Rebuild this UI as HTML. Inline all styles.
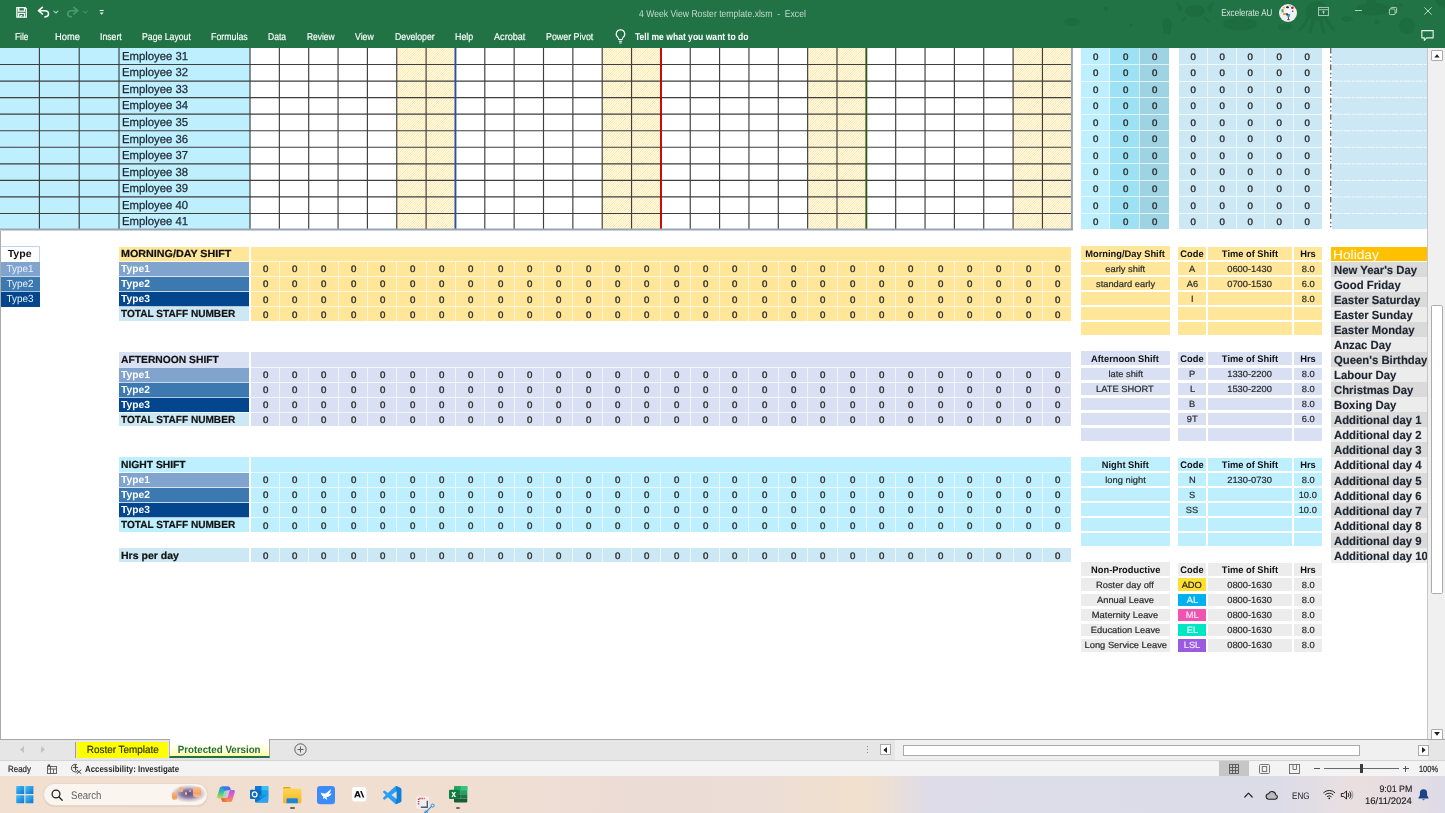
<!DOCTYPE html>
<html><head><meta charset="utf-8"><title>4 Week View Roster template.xlsm - Excel</title>
<style>
html,body{margin:0;padding:0;}
body{width:1445px;height:813px;overflow:hidden;position:relative;background:#fff;font-family:"Liberation Sans",sans-serif;}
#root{position:absolute;left:0;top:0;width:1445px;height:813px;overflow:hidden;background:transparent;will-change:transform;}
#root div{position:absolute;box-sizing:border-box;}
#root svg{position:absolute;overflow:visible;}
.t{white-space:nowrap;overflow:visible;}
.t span{display:inline-block;}
#root .zr{display:flex;}
.zr b{flex:1 1 0;text-align:center;font-weight:400;display:block;transform:matrix(1.02,.0005,0,1,0,0);-webkit-text-stroke:.4px currentColor;}
.rt{top:28px;height:17px;line-height:17px;font-size:10px;color:#fff;-webkit-text-stroke:.15px #fff;}
.rt span{transform-origin:0 50%;}
</style></head><body><div id="root">
<div style="left:0px;top:48px;width:250px;height:182.05px;background:#bdefff;"></div>
<svg style="left:0;top:48px" width="1074" height="183.05" viewBox="0 0 1074 183.05"><defs><pattern id="hz" patternUnits="userSpaceOnUse" width="12" height="12"><rect width="12" height="12" fill="#fffef7"/><path d="M0.5 -.5L-.5 0.5M2.9 -.5L-.5 2.9M5.3 -.5L-.5 5.3M7.7 -.5L-.5 7.7M10.1 -.5L-.5 10.1M12.5 -.5L-.5 12.5M14.9 -.5L-.5 14.9M17.3 -.5L-.5 17.3M19.7 -.5L-.5 19.7M22.1 -.5L-.5 22.1M24.5 -.5L-.5 24.5" stroke="#ffd668" stroke-width=".7"/></pattern></defs><rect x="396.75" y="0" width="58.7" height="182.05" fill="url(#hz)"/><rect x="602.2" y="0" width="58.7" height="182.05" fill="url(#hz)"/><rect x="807.65" y="0" width="58.7" height="182.05" fill="url(#hz)"/><rect x="1013.1" y="0" width="58.7" height="182.05" fill="url(#hz)"/><path d="M0 16.55H1072M0 33.1H1072M0 49.65H1072M0 66.2H1072M0 82.75H1072M0 99.3H1072M0 115.85H1072M0 132.4H1072M0 148.95H1072M0 165.5H1072M39.4 0V182.05M79.2 0V182.05M119 0V182.05M250 0V182.05M279.35 0V182.05M308.7 0V182.05M338.05 0V182.05M367.4 0V182.05M396.75 0V182.05M426.1 0V182.05M484.8 0V182.05M514.15 0V182.05M543.5 0V182.05M572.85 0V182.05M602.2 0V182.05M631.55 0V182.05M690.25 0V182.05M719.6 0V182.05M748.95 0V182.05M778.3 0V182.05M807.65 0V182.05M837 0V182.05M895.7 0V182.05M925.05 0V182.05M954.4 0V182.05M983.75 0V182.05M1013.1 0V182.05M1042.45 0V182.05" stroke="#3e3e3e" stroke-width="1.15" fill="none"/><path d="M455.45 0V182.05" stroke="#2a51a0" stroke-width="1.9"/><path d="M661 0V182.05" stroke="#c40000" stroke-width="1.9"/><path d="M866.35 0V182.05" stroke="#2f5a1c" stroke-width="1.9"/><path d="M1071.9 0V182.05M0 181.45H1073" stroke="#9aa4b2" stroke-width="2"/></svg>
<div class="t" style="left:119px;top:47.75px;width:131px;height:16.55px;line-height:16.55px;font-size:11.6px;color:#1c2730;padding-left:2.9px;-webkit-text-stroke:.25px #1c2730;"><span style="transform:matrix(0.977,.0005,0,1,0,0);transform-origin:0 50%">Employee 31</span></div>
<div class="t" style="left:119px;top:64.3px;width:131px;height:16.55px;line-height:16.55px;font-size:11.6px;color:#1c2730;padding-left:2.9px;-webkit-text-stroke:.25px #1c2730;"><span style="transform:matrix(0.977,.0005,0,1,0,0);transform-origin:0 50%">Employee 32</span></div>
<div class="t" style="left:119px;top:80.85px;width:131px;height:16.55px;line-height:16.55px;font-size:11.6px;color:#1c2730;padding-left:2.9px;-webkit-text-stroke:.25px #1c2730;"><span style="transform:matrix(0.977,.0005,0,1,0,0);transform-origin:0 50%">Employee 33</span></div>
<div class="t" style="left:119px;top:97.4px;width:131px;height:16.55px;line-height:16.55px;font-size:11.6px;color:#1c2730;padding-left:2.9px;-webkit-text-stroke:.25px #1c2730;"><span style="transform:matrix(0.977,.0005,0,1,0,0);transform-origin:0 50%">Employee 34</span></div>
<div class="t" style="left:119px;top:113.95px;width:131px;height:16.55px;line-height:16.55px;font-size:11.6px;color:#1c2730;padding-left:2.9px;-webkit-text-stroke:.25px #1c2730;"><span style="transform:matrix(0.977,.0005,0,1,0,0);transform-origin:0 50%">Employee 35</span></div>
<div class="t" style="left:119px;top:130.5px;width:131px;height:16.55px;line-height:16.55px;font-size:11.6px;color:#1c2730;padding-left:2.9px;-webkit-text-stroke:.25px #1c2730;"><span style="transform:matrix(0.977,.0005,0,1,0,0);transform-origin:0 50%">Employee 36</span></div>
<div class="t" style="left:119px;top:147.05px;width:131px;height:16.55px;line-height:16.55px;font-size:11.6px;color:#1c2730;padding-left:2.9px;-webkit-text-stroke:.25px #1c2730;"><span style="transform:matrix(0.977,.0005,0,1,0,0);transform-origin:0 50%">Employee 37</span></div>
<div class="t" style="left:119px;top:163.6px;width:131px;height:16.55px;line-height:16.55px;font-size:11.6px;color:#1c2730;padding-left:2.9px;-webkit-text-stroke:.25px #1c2730;"><span style="transform:matrix(0.977,.0005,0,1,0,0);transform-origin:0 50%">Employee 38</span></div>
<div class="t" style="left:119px;top:180.15px;width:131px;height:16.55px;line-height:16.55px;font-size:11.6px;color:#1c2730;padding-left:2.9px;-webkit-text-stroke:.25px #1c2730;"><span style="transform:matrix(0.977,.0005,0,1,0,0);transform-origin:0 50%">Employee 39</span></div>
<div class="t" style="left:119px;top:196.7px;width:131px;height:16.55px;line-height:16.55px;font-size:11.6px;color:#1c2730;padding-left:2.9px;-webkit-text-stroke:.25px #1c2730;"><span style="transform:matrix(0.977,.0005,0,1,0,0);transform-origin:0 50%">Employee 40</span></div>
<div class="t" style="left:119px;top:213.25px;width:131px;height:16.55px;line-height:16.55px;font-size:11.6px;color:#1c2730;padding-left:2.9px;-webkit-text-stroke:.25px #1c2730;"><span style="transform:matrix(0.977,.0005,0,1,0,0);transform-origin:0 50%">Employee 41</span></div>
<div style="left:1081.3px;top:48px;width:28.5px;height:181.25px;background:#bdefff;"></div>
<div style="left:1109.8px;top:48px;width:29.6px;height:181.25px;background:#9de1f5;"></div>
<div style="left:1139.4px;top:48px;width:29.8px;height:181.25px;background:#9dd3e3;"></div>
<div style="left:1179.1px;top:48px;width:142.5px;height:181.25px;background:#cce8f4;"></div>
<div style="left:1331.6px;top:48px;width:96.4px;height:181.25px;background:#cce8f4;"></div>
<div style="left:1081.3px;top:64.05px;width:87.9px;height:1px;background:rgba(255,255,255,.7);"></div>
<div style="left:1179.1px;top:64.05px;width:142.5px;height:1px;background:rgba(255,255,255,.75);"></div>
<div style="left:1081.3px;top:80.6px;width:87.9px;height:1px;background:rgba(255,255,255,.7);"></div>
<div style="left:1179.1px;top:80.6px;width:142.5px;height:1px;background:rgba(255,255,255,.75);"></div>
<div style="left:1081.3px;top:97.15px;width:87.9px;height:1px;background:rgba(255,255,255,.7);"></div>
<div style="left:1179.1px;top:97.15px;width:142.5px;height:1px;background:rgba(255,255,255,.75);"></div>
<div style="left:1081.3px;top:113.7px;width:87.9px;height:1px;background:rgba(255,255,255,.7);"></div>
<div style="left:1179.1px;top:113.7px;width:142.5px;height:1px;background:rgba(255,255,255,.75);"></div>
<div style="left:1081.3px;top:130.25px;width:87.9px;height:1px;background:rgba(255,255,255,.7);"></div>
<div style="left:1179.1px;top:130.25px;width:142.5px;height:1px;background:rgba(255,255,255,.75);"></div>
<div style="left:1081.3px;top:146.8px;width:87.9px;height:1px;background:rgba(255,255,255,.7);"></div>
<div style="left:1179.1px;top:146.8px;width:142.5px;height:1px;background:rgba(255,255,255,.75);"></div>
<div style="left:1081.3px;top:163.35px;width:87.9px;height:1px;background:rgba(255,255,255,.7);"></div>
<div style="left:1179.1px;top:163.35px;width:142.5px;height:1px;background:rgba(255,255,255,.75);"></div>
<div style="left:1081.3px;top:179.9px;width:87.9px;height:1px;background:rgba(255,255,255,.7);"></div>
<div style="left:1179.1px;top:179.9px;width:142.5px;height:1px;background:rgba(255,255,255,.75);"></div>
<div style="left:1081.3px;top:196.45px;width:87.9px;height:1px;background:rgba(255,255,255,.7);"></div>
<div style="left:1179.1px;top:196.45px;width:142.5px;height:1px;background:rgba(255,255,255,.75);"></div>
<div style="left:1081.3px;top:213px;width:87.9px;height:1px;background:rgba(255,255,255,.7);"></div>
<div style="left:1179.1px;top:213px;width:142.5px;height:1px;background:rgba(255,255,255,.75);"></div>
<div style="left:1207.1px;top:48px;width:1px;height:181.25px;background:rgba(255,255,255,.6);"></div>
<div style="left:1235.6px;top:48px;width:1px;height:181.25px;background:rgba(255,255,255,.6);"></div>
<div style="left:1264.4px;top:48px;width:1px;height:181.25px;background:rgba(255,255,255,.6);"></div>
<div style="left:1292.9px;top:48px;width:1px;height:181.25px;background:rgba(255,255,255,.6);"></div>
<div style="left:1109.2px;top:48px;width:1px;height:181.25px;background:rgba(255,255,255,.6);"></div>
<div style="left:1139px;top:48px;width:1px;height:181.25px;background:rgba(255,255,255,.6);"></div>
<svg style="left:1329px;top:48px" width="100" height="181.25" viewBox="0 0 100 181.25"><path d="M2.5 16.55H99M2.5 33.1H99M2.5 49.65H99M2.5 66.2H99M2.5 82.75H99M2.5 99.3H99M2.5 115.85H99M2.5 132.4H99M2.5 148.95H99M2.5 165.5H99" stroke="#fff" stroke-width=".8" stroke-dasharray="7.6 .9 2.6 .9" opacity=".92" fill="none"/><path d="M1.8 0V181.25" stroke="#3c3c3c" stroke-width="1.1" stroke-dasharray="5.6 2.6 1.7 2.6 1.3 2.75" fill="none"/></svg>
<div class="zr" style="left:1081.3px;top:48.6px;width:87.9px;height:16.55px;line-height:16.55px;font-size:9.5px;color:#2a2a2a"><b>0</b><b>0</b><b>0</b></div>
<div class="zr" style="left:1179.1px;top:48.6px;width:142.5px;height:16.55px;line-height:16.55px;font-size:9.5px;color:#2a2a2a"><b>0</b><b>0</b><b>0</b><b>0</b><b>0</b></div>
<div class="zr" style="left:1081.3px;top:65.15px;width:87.9px;height:16.55px;line-height:16.55px;font-size:9.5px;color:#2a2a2a"><b>0</b><b>0</b><b>0</b></div>
<div class="zr" style="left:1179.1px;top:65.15px;width:142.5px;height:16.55px;line-height:16.55px;font-size:9.5px;color:#2a2a2a"><b>0</b><b>0</b><b>0</b><b>0</b><b>0</b></div>
<div class="zr" style="left:1081.3px;top:81.7px;width:87.9px;height:16.55px;line-height:16.55px;font-size:9.5px;color:#2a2a2a"><b>0</b><b>0</b><b>0</b></div>
<div class="zr" style="left:1179.1px;top:81.7px;width:142.5px;height:16.55px;line-height:16.55px;font-size:9.5px;color:#2a2a2a"><b>0</b><b>0</b><b>0</b><b>0</b><b>0</b></div>
<div class="zr" style="left:1081.3px;top:98.25px;width:87.9px;height:16.55px;line-height:16.55px;font-size:9.5px;color:#2a2a2a"><b>0</b><b>0</b><b>0</b></div>
<div class="zr" style="left:1179.1px;top:98.25px;width:142.5px;height:16.55px;line-height:16.55px;font-size:9.5px;color:#2a2a2a"><b>0</b><b>0</b><b>0</b><b>0</b><b>0</b></div>
<div class="zr" style="left:1081.3px;top:114.8px;width:87.9px;height:16.55px;line-height:16.55px;font-size:9.5px;color:#2a2a2a"><b>0</b><b>0</b><b>0</b></div>
<div class="zr" style="left:1179.1px;top:114.8px;width:142.5px;height:16.55px;line-height:16.55px;font-size:9.5px;color:#2a2a2a"><b>0</b><b>0</b><b>0</b><b>0</b><b>0</b></div>
<div class="zr" style="left:1081.3px;top:131.35px;width:87.9px;height:16.55px;line-height:16.55px;font-size:9.5px;color:#2a2a2a"><b>0</b><b>0</b><b>0</b></div>
<div class="zr" style="left:1179.1px;top:131.35px;width:142.5px;height:16.55px;line-height:16.55px;font-size:9.5px;color:#2a2a2a"><b>0</b><b>0</b><b>0</b><b>0</b><b>0</b></div>
<div class="zr" style="left:1081.3px;top:147.9px;width:87.9px;height:16.55px;line-height:16.55px;font-size:9.5px;color:#2a2a2a"><b>0</b><b>0</b><b>0</b></div>
<div class="zr" style="left:1179.1px;top:147.9px;width:142.5px;height:16.55px;line-height:16.55px;font-size:9.5px;color:#2a2a2a"><b>0</b><b>0</b><b>0</b><b>0</b><b>0</b></div>
<div class="zr" style="left:1081.3px;top:164.45px;width:87.9px;height:16.55px;line-height:16.55px;font-size:9.5px;color:#2a2a2a"><b>0</b><b>0</b><b>0</b></div>
<div class="zr" style="left:1179.1px;top:164.45px;width:142.5px;height:16.55px;line-height:16.55px;font-size:9.5px;color:#2a2a2a"><b>0</b><b>0</b><b>0</b><b>0</b><b>0</b></div>
<div class="zr" style="left:1081.3px;top:181px;width:87.9px;height:16.55px;line-height:16.55px;font-size:9.5px;color:#2a2a2a"><b>0</b><b>0</b><b>0</b></div>
<div class="zr" style="left:1179.1px;top:181px;width:142.5px;height:16.55px;line-height:16.55px;font-size:9.5px;color:#2a2a2a"><b>0</b><b>0</b><b>0</b><b>0</b><b>0</b></div>
<div class="zr" style="left:1081.3px;top:197.55px;width:87.9px;height:16.55px;line-height:16.55px;font-size:9.5px;color:#2a2a2a"><b>0</b><b>0</b><b>0</b></div>
<div class="zr" style="left:1179.1px;top:197.55px;width:142.5px;height:16.55px;line-height:16.55px;font-size:9.5px;color:#2a2a2a"><b>0</b><b>0</b><b>0</b><b>0</b><b>0</b></div>
<div class="zr" style="left:1081.3px;top:214.1px;width:87.9px;height:16.55px;line-height:16.55px;font-size:9.5px;color:#2a2a2a"><b>0</b><b>0</b><b>0</b></div>
<div class="zr" style="left:1179.1px;top:214.1px;width:142.5px;height:16.55px;line-height:16.55px;font-size:9.5px;color:#2a2a2a"><b>0</b><b>0</b><b>0</b><b>0</b><b>0</b></div>
<div style="left:0px;top:245.8px;width:39.8px;height:60.98px;background:#fff;border:1px solid #b9d6f2;"></div>
<div class="t" style="left:0px;top:246.1px;width:39.6px;height:15.07px;line-height:15.07px;text-align:center;font-size:10.3px;font-weight:700;color:#111;"><span style="transform:matrix(1.03,.0005,0,1,0,0);transform-origin:50% 50%">Type</span></div>
<div style="left:0.5px;top:261.57px;width:39px;height:15.07px;background:#80a4ce;"></div>
<div class="t" style="left:0px;top:260.97px;width:39.6px;height:15.07px;line-height:15.07px;text-align:center;font-size:10.3px;color:#e9f0f9;"><span style="transform:matrix(0.966,.0005,0,1,0,0);transform-origin:50% 50%">Type1</span></div>
<div style="left:0.5px;top:276.64px;width:39px;height:15.07px;background:#3c79b1;"></div>
<div class="t" style="left:0px;top:276.04px;width:39.6px;height:15.07px;line-height:15.07px;text-align:center;font-size:10.3px;color:#e9f0f9;"><span style="transform:matrix(0.966,.0005,0,1,0,0);transform-origin:50% 50%">Type2</span></div>
<div style="left:0.5px;top:291.71px;width:39px;height:15.07px;background:#03468d;"></div>
<div class="t" style="left:0px;top:291.11px;width:39.6px;height:15.07px;line-height:15.07px;text-align:center;font-size:10.3px;color:#e9f0f9;"><span style="transform:matrix(0.966,.0005,0,1,0,0);transform-origin:50% 50%">Type3</span></div>
<div style="left:0.5px;top:276.14px;width:39px;height:1px;background:rgba(255,255,255,.55);"></div>
<div style="left:0.5px;top:291.21px;width:39px;height:1px;background:rgba(255,255,255,.55);"></div>
<div style="left:119.2px;top:246.5px;width:130.3px;height:15.07px;background:#ffe699;"></div>
<div style="left:250.6px;top:246.5px;width:820.8px;height:74.45px;background:#ffe699;"></div>
<div class="t" style="left:119.2px;top:246.1px;width:130.3px;height:15.07px;line-height:15.07px;font-size:10.3px;font-weight:700;color:#111;padding-left:1.6px;-webkit-text-stroke:.2px #111;"><span style="transform:matrix(1.043,.0005,0,1,0,0);transform-origin:0 50%">MORNING/DAY SHIFT</span></div>
<div style="left:119.2px;top:261.57px;width:130.3px;height:15.07px;background:#80a4ce;"></div>
<div class="t" style="left:119.2px;top:261.17px;width:130.3px;height:15.07px;line-height:15.07px;font-size:10.3px;font-weight:700;color:#fff;padding-left:1.6px;"><span style="transform:matrix(0.996,.0005,0,1,0,0);transform-origin:0 50%">Type1</span></div>
<div style="left:119.2px;top:276.64px;width:130.3px;height:15.07px;background:#3c79b1;"></div>
<div class="t" style="left:119.2px;top:276.24px;width:130.3px;height:15.07px;line-height:15.07px;font-size:10.3px;font-weight:700;color:#fff;padding-left:1.6px;"><span style="transform:matrix(0.996,.0005,0,1,0,0);transform-origin:0 50%">Type2</span></div>
<div style="left:119.2px;top:291.71px;width:130.3px;height:15.07px;background:#03468d;"></div>
<div class="t" style="left:119.2px;top:291.31px;width:130.3px;height:15.07px;line-height:15.07px;font-size:10.3px;font-weight:700;color:#fff;padding-left:1.6px;"><span style="transform:matrix(0.996,.0005,0,1,0,0);transform-origin:0 50%">Type3</span></div>
<div style="left:119.2px;top:306.78px;width:130.3px;height:14.17px;background:#cce8f4;"></div>
<div class="t" style="left:119.2px;top:306.38px;width:130.3px;height:15.07px;line-height:15.07px;font-size:10.3px;font-weight:700;color:#111;padding-left:1.6px;-webkit-text-stroke:.2px #111;"><span style="transform:matrix(0.98,.0005,0,1,0,0);transform-origin:0 50%">TOTAL STAFF NUMBER</span></div>
<div style="left:119.2px;top:261.07px;width:952.2px;height:1px;background:rgba(255,255,255,.7);"></div>
<div style="left:119.2px;top:276.14px;width:952.2px;height:1px;background:rgba(255,255,255,.7);"></div>
<div style="left:119.2px;top:291.21px;width:952.2px;height:1px;background:rgba(255,255,255,.7);"></div>
<div style="left:119.2px;top:306.28px;width:952.2px;height:1px;background:rgba(255,255,255,.7);"></div>
<div style="left:278.85px;top:261.57px;width:1px;height:59.38px;background:rgba(255,255,255,.65);"></div>
<div style="left:308.2px;top:261.57px;width:1px;height:59.38px;background:rgba(255,255,255,.65);"></div>
<div style="left:337.55px;top:261.57px;width:1px;height:59.38px;background:rgba(255,255,255,.65);"></div>
<div style="left:366.9px;top:261.57px;width:1px;height:59.38px;background:rgba(255,255,255,.65);"></div>
<div style="left:396.25px;top:261.57px;width:1px;height:59.38px;background:rgba(255,255,255,.65);"></div>
<div style="left:425.6px;top:261.57px;width:1px;height:59.38px;background:rgba(255,255,255,.65);"></div>
<div style="left:454.95px;top:261.57px;width:1px;height:59.38px;background:rgba(255,255,255,.65);"></div>
<div style="left:484.3px;top:261.57px;width:1px;height:59.38px;background:rgba(255,255,255,.65);"></div>
<div style="left:513.65px;top:261.57px;width:1px;height:59.38px;background:rgba(255,255,255,.65);"></div>
<div style="left:543px;top:261.57px;width:1px;height:59.38px;background:rgba(255,255,255,.65);"></div>
<div style="left:572.35px;top:261.57px;width:1px;height:59.38px;background:rgba(255,255,255,.65);"></div>
<div style="left:601.7px;top:261.57px;width:1px;height:59.38px;background:rgba(255,255,255,.65);"></div>
<div style="left:631.05px;top:261.57px;width:1px;height:59.38px;background:rgba(255,255,255,.65);"></div>
<div style="left:660.4px;top:261.57px;width:1px;height:59.38px;background:rgba(255,255,255,.65);"></div>
<div style="left:689.75px;top:261.57px;width:1px;height:59.38px;background:rgba(255,255,255,.65);"></div>
<div style="left:719.1px;top:261.57px;width:1px;height:59.38px;background:rgba(255,255,255,.65);"></div>
<div style="left:748.45px;top:261.57px;width:1px;height:59.38px;background:rgba(255,255,255,.65);"></div>
<div style="left:777.8px;top:261.57px;width:1px;height:59.38px;background:rgba(255,255,255,.65);"></div>
<div style="left:807.15px;top:261.57px;width:1px;height:59.38px;background:rgba(255,255,255,.65);"></div>
<div style="left:836.5px;top:261.57px;width:1px;height:59.38px;background:rgba(255,255,255,.65);"></div>
<div style="left:865.85px;top:261.57px;width:1px;height:59.38px;background:rgba(255,255,255,.65);"></div>
<div style="left:895.2px;top:261.57px;width:1px;height:59.38px;background:rgba(255,255,255,.65);"></div>
<div style="left:924.55px;top:261.57px;width:1px;height:59.38px;background:rgba(255,255,255,.65);"></div>
<div style="left:953.9px;top:261.57px;width:1px;height:59.38px;background:rgba(255,255,255,.65);"></div>
<div style="left:983.25px;top:261.57px;width:1px;height:59.38px;background:rgba(255,255,255,.65);"></div>
<div style="left:1012.6px;top:261.57px;width:1px;height:59.38px;background:rgba(255,255,255,.65);"></div>
<div style="left:1041.95px;top:261.57px;width:1px;height:59.38px;background:rgba(255,255,255,.65);"></div>
<div class="zr" style="left:250.8px;top:261.37px;width:821.8px;height:15.07px;line-height:15.07px;font-size:9.5px;color:#2a2a2a"><b>0</b><b>0</b><b>0</b><b>0</b><b>0</b><b>0</b><b>0</b><b>0</b><b>0</b><b>0</b><b>0</b><b>0</b><b>0</b><b>0</b><b>0</b><b>0</b><b>0</b><b>0</b><b>0</b><b>0</b><b>0</b><b>0</b><b>0</b><b>0</b><b>0</b><b>0</b><b>0</b><b>0</b></div>
<div class="zr" style="left:250.8px;top:276.44px;width:821.8px;height:15.07px;line-height:15.07px;font-size:9.5px;color:#2a2a2a"><b>0</b><b>0</b><b>0</b><b>0</b><b>0</b><b>0</b><b>0</b><b>0</b><b>0</b><b>0</b><b>0</b><b>0</b><b>0</b><b>0</b><b>0</b><b>0</b><b>0</b><b>0</b><b>0</b><b>0</b><b>0</b><b>0</b><b>0</b><b>0</b><b>0</b><b>0</b><b>0</b><b>0</b></div>
<div class="zr" style="left:250.8px;top:291.51px;width:821.8px;height:15.07px;line-height:15.07px;font-size:9.5px;color:#2a2a2a"><b>0</b><b>0</b><b>0</b><b>0</b><b>0</b><b>0</b><b>0</b><b>0</b><b>0</b><b>0</b><b>0</b><b>0</b><b>0</b><b>0</b><b>0</b><b>0</b><b>0</b><b>0</b><b>0</b><b>0</b><b>0</b><b>0</b><b>0</b><b>0</b><b>0</b><b>0</b><b>0</b><b>0</b></div>
<div class="zr" style="left:250.8px;top:306.58px;width:821.8px;height:15.07px;line-height:15.07px;font-size:9.5px;color:#2a2a2a"><b>0</b><b>0</b><b>0</b><b>0</b><b>0</b><b>0</b><b>0</b><b>0</b><b>0</b><b>0</b><b>0</b><b>0</b><b>0</b><b>0</b><b>0</b><b>0</b><b>0</b><b>0</b><b>0</b><b>0</b><b>0</b><b>0</b><b>0</b><b>0</b><b>0</b><b>0</b><b>0</b><b>0</b></div>
<div style="left:119.2px;top:351.99px;width:130.3px;height:15.07px;background:#d9e0f3;"></div>
<div style="left:250.6px;top:351.99px;width:820.8px;height:74.45px;background:#d9e0f3;"></div>
<div class="t" style="left:119.2px;top:351.59px;width:130.3px;height:15.07px;line-height:15.07px;font-size:10.3px;font-weight:700;color:#111;padding-left:1.6px;-webkit-text-stroke:.2px #111;"><span style="transform:matrix(1.0,.0005,0,1,0,0);transform-origin:0 50%">AFTERNOON SHIFT</span></div>
<div style="left:119.2px;top:367.06px;width:130.3px;height:15.07px;background:#80a4ce;"></div>
<div class="t" style="left:119.2px;top:366.66px;width:130.3px;height:15.07px;line-height:15.07px;font-size:10.3px;font-weight:700;color:#fff;padding-left:1.6px;"><span style="transform:matrix(0.996,.0005,0,1,0,0);transform-origin:0 50%">Type1</span></div>
<div style="left:119.2px;top:382.13px;width:130.3px;height:15.07px;background:#3c79b1;"></div>
<div class="t" style="left:119.2px;top:381.73px;width:130.3px;height:15.07px;line-height:15.07px;font-size:10.3px;font-weight:700;color:#fff;padding-left:1.6px;"><span style="transform:matrix(0.996,.0005,0,1,0,0);transform-origin:0 50%">Type2</span></div>
<div style="left:119.2px;top:397.2px;width:130.3px;height:15.07px;background:#03468d;"></div>
<div class="t" style="left:119.2px;top:396.8px;width:130.3px;height:15.07px;line-height:15.07px;font-size:10.3px;font-weight:700;color:#fff;padding-left:1.6px;"><span style="transform:matrix(0.996,.0005,0,1,0,0);transform-origin:0 50%">Type3</span></div>
<div style="left:119.2px;top:412.27px;width:130.3px;height:14.17px;background:#cce8f4;"></div>
<div class="t" style="left:119.2px;top:411.87px;width:130.3px;height:15.07px;line-height:15.07px;font-size:10.3px;font-weight:700;color:#111;padding-left:1.6px;-webkit-text-stroke:.2px #111;"><span style="transform:matrix(0.98,.0005,0,1,0,0);transform-origin:0 50%">TOTAL STAFF NUMBER</span></div>
<div style="left:119.2px;top:366.56px;width:952.2px;height:1px;background:rgba(255,255,255,.7);"></div>
<div style="left:119.2px;top:381.63px;width:952.2px;height:1px;background:rgba(255,255,255,.7);"></div>
<div style="left:119.2px;top:396.7px;width:952.2px;height:1px;background:rgba(255,255,255,.7);"></div>
<div style="left:119.2px;top:411.77px;width:952.2px;height:1px;background:rgba(255,255,255,.7);"></div>
<div style="left:278.85px;top:367.06px;width:1px;height:59.38px;background:rgba(255,255,255,.65);"></div>
<div style="left:308.2px;top:367.06px;width:1px;height:59.38px;background:rgba(255,255,255,.65);"></div>
<div style="left:337.55px;top:367.06px;width:1px;height:59.38px;background:rgba(255,255,255,.65);"></div>
<div style="left:366.9px;top:367.06px;width:1px;height:59.38px;background:rgba(255,255,255,.65);"></div>
<div style="left:396.25px;top:367.06px;width:1px;height:59.38px;background:rgba(255,255,255,.65);"></div>
<div style="left:425.6px;top:367.06px;width:1px;height:59.38px;background:rgba(255,255,255,.65);"></div>
<div style="left:454.95px;top:367.06px;width:1px;height:59.38px;background:rgba(255,255,255,.65);"></div>
<div style="left:484.3px;top:367.06px;width:1px;height:59.38px;background:rgba(255,255,255,.65);"></div>
<div style="left:513.65px;top:367.06px;width:1px;height:59.38px;background:rgba(255,255,255,.65);"></div>
<div style="left:543px;top:367.06px;width:1px;height:59.38px;background:rgba(255,255,255,.65);"></div>
<div style="left:572.35px;top:367.06px;width:1px;height:59.38px;background:rgba(255,255,255,.65);"></div>
<div style="left:601.7px;top:367.06px;width:1px;height:59.38px;background:rgba(255,255,255,.65);"></div>
<div style="left:631.05px;top:367.06px;width:1px;height:59.38px;background:rgba(255,255,255,.65);"></div>
<div style="left:660.4px;top:367.06px;width:1px;height:59.38px;background:rgba(255,255,255,.65);"></div>
<div style="left:689.75px;top:367.06px;width:1px;height:59.38px;background:rgba(255,255,255,.65);"></div>
<div style="left:719.1px;top:367.06px;width:1px;height:59.38px;background:rgba(255,255,255,.65);"></div>
<div style="left:748.45px;top:367.06px;width:1px;height:59.38px;background:rgba(255,255,255,.65);"></div>
<div style="left:777.8px;top:367.06px;width:1px;height:59.38px;background:rgba(255,255,255,.65);"></div>
<div style="left:807.15px;top:367.06px;width:1px;height:59.38px;background:rgba(255,255,255,.65);"></div>
<div style="left:836.5px;top:367.06px;width:1px;height:59.38px;background:rgba(255,255,255,.65);"></div>
<div style="left:865.85px;top:367.06px;width:1px;height:59.38px;background:rgba(255,255,255,.65);"></div>
<div style="left:895.2px;top:367.06px;width:1px;height:59.38px;background:rgba(255,255,255,.65);"></div>
<div style="left:924.55px;top:367.06px;width:1px;height:59.38px;background:rgba(255,255,255,.65);"></div>
<div style="left:953.9px;top:367.06px;width:1px;height:59.38px;background:rgba(255,255,255,.65);"></div>
<div style="left:983.25px;top:367.06px;width:1px;height:59.38px;background:rgba(255,255,255,.65);"></div>
<div style="left:1012.6px;top:367.06px;width:1px;height:59.38px;background:rgba(255,255,255,.65);"></div>
<div style="left:1041.95px;top:367.06px;width:1px;height:59.38px;background:rgba(255,255,255,.65);"></div>
<div class="zr" style="left:250.8px;top:366.86px;width:821.8px;height:15.07px;line-height:15.07px;font-size:9.5px;color:#2a2a2a"><b>0</b><b>0</b><b>0</b><b>0</b><b>0</b><b>0</b><b>0</b><b>0</b><b>0</b><b>0</b><b>0</b><b>0</b><b>0</b><b>0</b><b>0</b><b>0</b><b>0</b><b>0</b><b>0</b><b>0</b><b>0</b><b>0</b><b>0</b><b>0</b><b>0</b><b>0</b><b>0</b><b>0</b></div>
<div class="zr" style="left:250.8px;top:381.93px;width:821.8px;height:15.07px;line-height:15.07px;font-size:9.5px;color:#2a2a2a"><b>0</b><b>0</b><b>0</b><b>0</b><b>0</b><b>0</b><b>0</b><b>0</b><b>0</b><b>0</b><b>0</b><b>0</b><b>0</b><b>0</b><b>0</b><b>0</b><b>0</b><b>0</b><b>0</b><b>0</b><b>0</b><b>0</b><b>0</b><b>0</b><b>0</b><b>0</b><b>0</b><b>0</b></div>
<div class="zr" style="left:250.8px;top:397px;width:821.8px;height:15.07px;line-height:15.07px;font-size:9.5px;color:#2a2a2a"><b>0</b><b>0</b><b>0</b><b>0</b><b>0</b><b>0</b><b>0</b><b>0</b><b>0</b><b>0</b><b>0</b><b>0</b><b>0</b><b>0</b><b>0</b><b>0</b><b>0</b><b>0</b><b>0</b><b>0</b><b>0</b><b>0</b><b>0</b><b>0</b><b>0</b><b>0</b><b>0</b><b>0</b></div>
<div class="zr" style="left:250.8px;top:412.07px;width:821.8px;height:15.07px;line-height:15.07px;font-size:9.5px;color:#2a2a2a"><b>0</b><b>0</b><b>0</b><b>0</b><b>0</b><b>0</b><b>0</b><b>0</b><b>0</b><b>0</b><b>0</b><b>0</b><b>0</b><b>0</b><b>0</b><b>0</b><b>0</b><b>0</b><b>0</b><b>0</b><b>0</b><b>0</b><b>0</b><b>0</b><b>0</b><b>0</b><b>0</b><b>0</b></div>
<div style="left:119.2px;top:457.48px;width:130.3px;height:15.07px;background:#bdefff;"></div>
<div style="left:250.6px;top:457.48px;width:820.8px;height:74.45px;background:#bdefff;"></div>
<div class="t" style="left:119.2px;top:457.08px;width:130.3px;height:15.07px;line-height:15.07px;font-size:10.3px;font-weight:700;color:#111;padding-left:1.6px;-webkit-text-stroke:.2px #111;"><span style="transform:matrix(1.0,.0005,0,1,0,0);transform-origin:0 50%">NIGHT SHIFT</span></div>
<div style="left:119.2px;top:472.55px;width:130.3px;height:15.07px;background:#80a4ce;"></div>
<div class="t" style="left:119.2px;top:472.15px;width:130.3px;height:15.07px;line-height:15.07px;font-size:10.3px;font-weight:700;color:#fff;padding-left:1.6px;"><span style="transform:matrix(0.996,.0005,0,1,0,0);transform-origin:0 50%">Type1</span></div>
<div style="left:119.2px;top:487.62px;width:130.3px;height:15.07px;background:#3c79b1;"></div>
<div class="t" style="left:119.2px;top:487.22px;width:130.3px;height:15.07px;line-height:15.07px;font-size:10.3px;font-weight:700;color:#fff;padding-left:1.6px;"><span style="transform:matrix(0.996,.0005,0,1,0,0);transform-origin:0 50%">Type2</span></div>
<div style="left:119.2px;top:502.69px;width:130.3px;height:15.07px;background:#03468d;"></div>
<div class="t" style="left:119.2px;top:502.29px;width:130.3px;height:15.07px;line-height:15.07px;font-size:10.3px;font-weight:700;color:#fff;padding-left:1.6px;"><span style="transform:matrix(0.996,.0005,0,1,0,0);transform-origin:0 50%">Type3</span></div>
<div style="left:119.2px;top:517.76px;width:130.3px;height:14.17px;background:#bdefff;"></div>
<div class="t" style="left:119.2px;top:517.36px;width:130.3px;height:15.07px;line-height:15.07px;font-size:10.3px;font-weight:700;color:#111;padding-left:1.6px;-webkit-text-stroke:.2px #111;"><span style="transform:matrix(0.98,.0005,0,1,0,0);transform-origin:0 50%">TOTAL STAFF NUMBER</span></div>
<div style="left:119.2px;top:472.05px;width:952.2px;height:1px;background:rgba(255,255,255,.7);"></div>
<div style="left:119.2px;top:487.12px;width:952.2px;height:1px;background:rgba(255,255,255,.7);"></div>
<div style="left:119.2px;top:502.19px;width:952.2px;height:1px;background:rgba(255,255,255,.7);"></div>
<div style="left:119.2px;top:517.26px;width:952.2px;height:1px;background:rgba(255,255,255,.7);"></div>
<div style="left:278.85px;top:472.55px;width:1px;height:59.38px;background:rgba(255,255,255,.65);"></div>
<div style="left:308.2px;top:472.55px;width:1px;height:59.38px;background:rgba(255,255,255,.65);"></div>
<div style="left:337.55px;top:472.55px;width:1px;height:59.38px;background:rgba(255,255,255,.65);"></div>
<div style="left:366.9px;top:472.55px;width:1px;height:59.38px;background:rgba(255,255,255,.65);"></div>
<div style="left:396.25px;top:472.55px;width:1px;height:59.38px;background:rgba(255,255,255,.65);"></div>
<div style="left:425.6px;top:472.55px;width:1px;height:59.38px;background:rgba(255,255,255,.65);"></div>
<div style="left:454.95px;top:472.55px;width:1px;height:59.38px;background:rgba(255,255,255,.65);"></div>
<div style="left:484.3px;top:472.55px;width:1px;height:59.38px;background:rgba(255,255,255,.65);"></div>
<div style="left:513.65px;top:472.55px;width:1px;height:59.38px;background:rgba(255,255,255,.65);"></div>
<div style="left:543px;top:472.55px;width:1px;height:59.38px;background:rgba(255,255,255,.65);"></div>
<div style="left:572.35px;top:472.55px;width:1px;height:59.38px;background:rgba(255,255,255,.65);"></div>
<div style="left:601.7px;top:472.55px;width:1px;height:59.38px;background:rgba(255,255,255,.65);"></div>
<div style="left:631.05px;top:472.55px;width:1px;height:59.38px;background:rgba(255,255,255,.65);"></div>
<div style="left:660.4px;top:472.55px;width:1px;height:59.38px;background:rgba(255,255,255,.65);"></div>
<div style="left:689.75px;top:472.55px;width:1px;height:59.38px;background:rgba(255,255,255,.65);"></div>
<div style="left:719.1px;top:472.55px;width:1px;height:59.38px;background:rgba(255,255,255,.65);"></div>
<div style="left:748.45px;top:472.55px;width:1px;height:59.38px;background:rgba(255,255,255,.65);"></div>
<div style="left:777.8px;top:472.55px;width:1px;height:59.38px;background:rgba(255,255,255,.65);"></div>
<div style="left:807.15px;top:472.55px;width:1px;height:59.38px;background:rgba(255,255,255,.65);"></div>
<div style="left:836.5px;top:472.55px;width:1px;height:59.38px;background:rgba(255,255,255,.65);"></div>
<div style="left:865.85px;top:472.55px;width:1px;height:59.38px;background:rgba(255,255,255,.65);"></div>
<div style="left:895.2px;top:472.55px;width:1px;height:59.38px;background:rgba(255,255,255,.65);"></div>
<div style="left:924.55px;top:472.55px;width:1px;height:59.38px;background:rgba(255,255,255,.65);"></div>
<div style="left:953.9px;top:472.55px;width:1px;height:59.38px;background:rgba(255,255,255,.65);"></div>
<div style="left:983.25px;top:472.55px;width:1px;height:59.38px;background:rgba(255,255,255,.65);"></div>
<div style="left:1012.6px;top:472.55px;width:1px;height:59.38px;background:rgba(255,255,255,.65);"></div>
<div style="left:1041.95px;top:472.55px;width:1px;height:59.38px;background:rgba(255,255,255,.65);"></div>
<div class="zr" style="left:250.8px;top:472.35px;width:821.8px;height:15.07px;line-height:15.07px;font-size:9.5px;color:#2a2a2a"><b>0</b><b>0</b><b>0</b><b>0</b><b>0</b><b>0</b><b>0</b><b>0</b><b>0</b><b>0</b><b>0</b><b>0</b><b>0</b><b>0</b><b>0</b><b>0</b><b>0</b><b>0</b><b>0</b><b>0</b><b>0</b><b>0</b><b>0</b><b>0</b><b>0</b><b>0</b><b>0</b><b>0</b></div>
<div class="zr" style="left:250.8px;top:487.42px;width:821.8px;height:15.07px;line-height:15.07px;font-size:9.5px;color:#2a2a2a"><b>0</b><b>0</b><b>0</b><b>0</b><b>0</b><b>0</b><b>0</b><b>0</b><b>0</b><b>0</b><b>0</b><b>0</b><b>0</b><b>0</b><b>0</b><b>0</b><b>0</b><b>0</b><b>0</b><b>0</b><b>0</b><b>0</b><b>0</b><b>0</b><b>0</b><b>0</b><b>0</b><b>0</b></div>
<div class="zr" style="left:250.8px;top:502.49px;width:821.8px;height:15.07px;line-height:15.07px;font-size:9.5px;color:#2a2a2a"><b>0</b><b>0</b><b>0</b><b>0</b><b>0</b><b>0</b><b>0</b><b>0</b><b>0</b><b>0</b><b>0</b><b>0</b><b>0</b><b>0</b><b>0</b><b>0</b><b>0</b><b>0</b><b>0</b><b>0</b><b>0</b><b>0</b><b>0</b><b>0</b><b>0</b><b>0</b><b>0</b><b>0</b></div>
<div class="zr" style="left:250.8px;top:517.56px;width:821.8px;height:15.07px;line-height:15.07px;font-size:9.5px;color:#2a2a2a"><b>0</b><b>0</b><b>0</b><b>0</b><b>0</b><b>0</b><b>0</b><b>0</b><b>0</b><b>0</b><b>0</b><b>0</b><b>0</b><b>0</b><b>0</b><b>0</b><b>0</b><b>0</b><b>0</b><b>0</b><b>0</b><b>0</b><b>0</b><b>0</b><b>0</b><b>0</b><b>0</b><b>0</b></div>
<div style="left:119.2px;top:548.3px;width:130.3px;height:13.87px;background:#cce8f4;"></div>
<div style="left:250.6px;top:548.3px;width:820.8px;height:13.87px;background:#cce8f4;"></div>
<div class="t" style="left:119.2px;top:547.5px;width:130.3px;height:15.07px;line-height:15.07px;font-size:10.3px;font-weight:700;color:#111;padding-left:1.6px;-webkit-text-stroke:.2px #111;"><span style="transform:matrix(1.023,.0005,0,1,0,0);transform-origin:0 50%">Hrs per day</span></div>
<div style="left:278.85px;top:547.9px;width:1px;height:14.17px;background:rgba(255,255,255,.65);"></div>
<div style="left:308.2px;top:547.9px;width:1px;height:14.17px;background:rgba(255,255,255,.65);"></div>
<div style="left:337.55px;top:547.9px;width:1px;height:14.17px;background:rgba(255,255,255,.65);"></div>
<div style="left:366.9px;top:547.9px;width:1px;height:14.17px;background:rgba(255,255,255,.65);"></div>
<div style="left:396.25px;top:547.9px;width:1px;height:14.17px;background:rgba(255,255,255,.65);"></div>
<div style="left:425.6px;top:547.9px;width:1px;height:14.17px;background:rgba(255,255,255,.65);"></div>
<div style="left:454.95px;top:547.9px;width:1px;height:14.17px;background:rgba(255,255,255,.65);"></div>
<div style="left:484.3px;top:547.9px;width:1px;height:14.17px;background:rgba(255,255,255,.65);"></div>
<div style="left:513.65px;top:547.9px;width:1px;height:14.17px;background:rgba(255,255,255,.65);"></div>
<div style="left:543px;top:547.9px;width:1px;height:14.17px;background:rgba(255,255,255,.65);"></div>
<div style="left:572.35px;top:547.9px;width:1px;height:14.17px;background:rgba(255,255,255,.65);"></div>
<div style="left:601.7px;top:547.9px;width:1px;height:14.17px;background:rgba(255,255,255,.65);"></div>
<div style="left:631.05px;top:547.9px;width:1px;height:14.17px;background:rgba(255,255,255,.65);"></div>
<div style="left:660.4px;top:547.9px;width:1px;height:14.17px;background:rgba(255,255,255,.65);"></div>
<div style="left:689.75px;top:547.9px;width:1px;height:14.17px;background:rgba(255,255,255,.65);"></div>
<div style="left:719.1px;top:547.9px;width:1px;height:14.17px;background:rgba(255,255,255,.65);"></div>
<div style="left:748.45px;top:547.9px;width:1px;height:14.17px;background:rgba(255,255,255,.65);"></div>
<div style="left:777.8px;top:547.9px;width:1px;height:14.17px;background:rgba(255,255,255,.65);"></div>
<div style="left:807.15px;top:547.9px;width:1px;height:14.17px;background:rgba(255,255,255,.65);"></div>
<div style="left:836.5px;top:547.9px;width:1px;height:14.17px;background:rgba(255,255,255,.65);"></div>
<div style="left:865.85px;top:547.9px;width:1px;height:14.17px;background:rgba(255,255,255,.65);"></div>
<div style="left:895.2px;top:547.9px;width:1px;height:14.17px;background:rgba(255,255,255,.65);"></div>
<div style="left:924.55px;top:547.9px;width:1px;height:14.17px;background:rgba(255,255,255,.65);"></div>
<div style="left:953.9px;top:547.9px;width:1px;height:14.17px;background:rgba(255,255,255,.65);"></div>
<div style="left:983.25px;top:547.9px;width:1px;height:14.17px;background:rgba(255,255,255,.65);"></div>
<div style="left:1012.6px;top:547.9px;width:1px;height:14.17px;background:rgba(255,255,255,.65);"></div>
<div style="left:1041.95px;top:547.9px;width:1px;height:14.17px;background:rgba(255,255,255,.65);"></div>
<div class="zr" style="left:250.8px;top:547.7px;width:821.8px;height:15.07px;line-height:15.07px;font-size:9.5px;color:#2a2a2a"><b>0</b><b>0</b><b>0</b><b>0</b><b>0</b><b>0</b><b>0</b><b>0</b><b>0</b><b>0</b><b>0</b><b>0</b><b>0</b><b>0</b><b>0</b><b>0</b><b>0</b><b>0</b><b>0</b><b>0</b><b>0</b><b>0</b><b>0</b><b>0</b><b>0</b><b>0</b><b>0</b><b>0</b></div>
<div style="left:1080.7px;top:245.85px;width:89.2px;height:89.22px;background:#ffe699;"></div>
<div style="left:1178.1px;top:246.95px;width:27.9px;height:88.12px;background:#ffe699;"></div>
<div style="left:1207.8px;top:246.95px;width:84.4px;height:88.12px;background:#ffe699;"></div>
<div style="left:1293.6px;top:246.95px;width:28.4px;height:88.12px;background:#ffe699;"></div>
<div style="left:1080px;top:259.72px;width:243px;height:2.3px;background:#fff;"></div>
<div style="left:1080px;top:274.79px;width:243px;height:2.3px;background:#fff;"></div>
<div style="left:1080px;top:289.86px;width:243px;height:2.3px;background:#fff;"></div>
<div style="left:1080px;top:304.93px;width:243px;height:2.3px;background:#fff;"></div>
<div style="left:1080px;top:320px;width:243px;height:2.3px;background:#fff;"></div>
<div class="t" style="left:1080.7px;top:245.65px;width:89.2px;height:15.07px;line-height:15.07px;text-align:center;font-size:9.6px;font-weight:700;color:#111;"><span style="transform:matrix(0.97,.0005,0,1,0,0);transform-origin:50% 50%">Morning/Day Shift</span></div>
<div class="t" style="left:1178.1px;top:245.65px;width:27.9px;height:15.07px;line-height:15.07px;text-align:center;font-size:9.6px;font-weight:700;color:#111;"><span style="transform:matrix(0.97,.0005,0,1,0,0);transform-origin:50% 50%">Code</span></div>
<div class="t" style="left:1207.8px;top:245.65px;width:84.4px;height:15.07px;line-height:15.07px;text-align:center;font-size:9.6px;font-weight:700;color:#111;"><span style="transform:matrix(0.97,.0005,0,1,0,0);transform-origin:50% 50%">Time of Shift</span></div>
<div class="t" style="left:1293.6px;top:245.65px;width:28.4px;height:15.07px;line-height:15.07px;text-align:center;font-size:9.6px;font-weight:700;color:#111;"><span style="transform:matrix(0.97,.0005,0,1,0,0);transform-origin:50% 50%">Hrs</span></div>
<div class="t" style="left:1080.7px;top:261.67px;width:89.2px;height:15.07px;line-height:15.07px;text-align:center;font-size:9px;color:#2a2a2a;-webkit-text-stroke:.2px #2a2a2a;"><span style="transform:matrix(1.036,.0005,0,1,0,0);transform-origin:50% 50%">early shift</span></div>
<div class="t" style="left:1178.1px;top:261.67px;width:27.9px;height:15.07px;line-height:15.07px;text-align:center;font-size:9px;color:#2a2a2a;-webkit-text-stroke:.2px #2a2a2a;"><span style="transform:matrix(1.036,.0005,0,1,0,0);transform-origin:50% 50%">A</span></div>
<div class="t" style="left:1207.8px;top:261.67px;width:84.4px;height:15.07px;line-height:15.07px;text-align:center;font-size:9px;color:#2a2a2a;-webkit-text-stroke:.2px #2a2a2a;"><span style="transform:matrix(1.036,.0005,0,1,0,0);transform-origin:50% 50%">0600-1430</span></div>
<div class="t" style="left:1293.6px;top:261.67px;width:28.4px;height:15.07px;line-height:15.07px;text-align:center;font-size:9px;color:#2a2a2a;-webkit-text-stroke:.2px #2a2a2a;"><span style="transform:matrix(1.036,.0005,0,1,0,0);transform-origin:50% 50%">8.0</span></div>
<div class="t" style="left:1080.7px;top:276.74px;width:89.2px;height:15.07px;line-height:15.07px;text-align:center;font-size:9px;color:#2a2a2a;-webkit-text-stroke:.2px #2a2a2a;"><span style="transform:matrix(1.036,.0005,0,1,0,0);transform-origin:50% 50%">standard early</span></div>
<div class="t" style="left:1178.1px;top:276.74px;width:27.9px;height:15.07px;line-height:15.07px;text-align:center;font-size:9px;color:#2a2a2a;-webkit-text-stroke:.2px #2a2a2a;"><span style="transform:matrix(1.036,.0005,0,1,0,0);transform-origin:50% 50%">A6</span></div>
<div class="t" style="left:1207.8px;top:276.74px;width:84.4px;height:15.07px;line-height:15.07px;text-align:center;font-size:9px;color:#2a2a2a;-webkit-text-stroke:.2px #2a2a2a;"><span style="transform:matrix(1.036,.0005,0,1,0,0);transform-origin:50% 50%">0700-1530</span></div>
<div class="t" style="left:1293.6px;top:276.74px;width:28.4px;height:15.07px;line-height:15.07px;text-align:center;font-size:9px;color:#2a2a2a;-webkit-text-stroke:.2px #2a2a2a;"><span style="transform:matrix(1.036,.0005,0,1,0,0);transform-origin:50% 50%">6.0</span></div>
<div class="t" style="left:1178.1px;top:291.81px;width:27.9px;height:15.07px;line-height:15.07px;text-align:center;font-size:9px;color:#2a2a2a;-webkit-text-stroke:.2px #2a2a2a;"><span style="transform:matrix(1.036,.0005,0,1,0,0);transform-origin:50% 50%">I</span></div>
<div class="t" style="left:1293.6px;top:291.81px;width:28.4px;height:15.07px;line-height:15.07px;text-align:center;font-size:9px;color:#2a2a2a;-webkit-text-stroke:.2px #2a2a2a;"><span style="transform:matrix(1.036,.0005,0,1,0,0);transform-origin:50% 50%">8.0</span></div>
<div style="left:1080.7px;top:351.34px;width:89.2px;height:89.22px;background:#d9e0f3;"></div>
<div style="left:1178.1px;top:352.44px;width:27.9px;height:88.12px;background:#d9e0f3;"></div>
<div style="left:1207.8px;top:352.44px;width:84.4px;height:88.12px;background:#d9e0f3;"></div>
<div style="left:1293.6px;top:352.44px;width:28.4px;height:88.12px;background:#d9e0f3;"></div>
<div style="left:1080px;top:365.21px;width:243px;height:2.3px;background:#fff;"></div>
<div style="left:1080px;top:380.28px;width:243px;height:2.3px;background:#fff;"></div>
<div style="left:1080px;top:395.35px;width:243px;height:2.3px;background:#fff;"></div>
<div style="left:1080px;top:410.42px;width:243px;height:2.3px;background:#fff;"></div>
<div style="left:1080px;top:425.49px;width:243px;height:2.3px;background:#fff;"></div>
<div class="t" style="left:1080.7px;top:351.14px;width:89.2px;height:15.07px;line-height:15.07px;text-align:center;font-size:9.6px;font-weight:700;color:#111;"><span style="transform:matrix(0.97,.0005,0,1,0,0);transform-origin:50% 50%">Afternoon Shift</span></div>
<div class="t" style="left:1178.1px;top:351.14px;width:27.9px;height:15.07px;line-height:15.07px;text-align:center;font-size:9.6px;font-weight:700;color:#111;"><span style="transform:matrix(0.97,.0005,0,1,0,0);transform-origin:50% 50%">Code</span></div>
<div class="t" style="left:1207.8px;top:351.14px;width:84.4px;height:15.07px;line-height:15.07px;text-align:center;font-size:9.6px;font-weight:700;color:#111;"><span style="transform:matrix(0.97,.0005,0,1,0,0);transform-origin:50% 50%">Time of Shift</span></div>
<div class="t" style="left:1293.6px;top:351.14px;width:28.4px;height:15.07px;line-height:15.07px;text-align:center;font-size:9.6px;font-weight:700;color:#111;"><span style="transform:matrix(0.97,.0005,0,1,0,0);transform-origin:50% 50%">Hrs</span></div>
<div class="t" style="left:1080.7px;top:367.16px;width:89.2px;height:15.07px;line-height:15.07px;text-align:center;font-size:9px;color:#2a2a2a;-webkit-text-stroke:.2px #2a2a2a;"><span style="transform:matrix(1.036,.0005,0,1,0,0);transform-origin:50% 50%">late shift</span></div>
<div class="t" style="left:1178.1px;top:367.16px;width:27.9px;height:15.07px;line-height:15.07px;text-align:center;font-size:9px;color:#2a2a2a;-webkit-text-stroke:.2px #2a2a2a;"><span style="transform:matrix(1.036,.0005,0,1,0,0);transform-origin:50% 50%">P</span></div>
<div class="t" style="left:1207.8px;top:367.16px;width:84.4px;height:15.07px;line-height:15.07px;text-align:center;font-size:9px;color:#2a2a2a;-webkit-text-stroke:.2px #2a2a2a;"><span style="transform:matrix(1.036,.0005,0,1,0,0);transform-origin:50% 50%">1330-2200</span></div>
<div class="t" style="left:1293.6px;top:367.16px;width:28.4px;height:15.07px;line-height:15.07px;text-align:center;font-size:9px;color:#2a2a2a;-webkit-text-stroke:.2px #2a2a2a;"><span style="transform:matrix(1.036,.0005,0,1,0,0);transform-origin:50% 50%">8.0</span></div>
<div class="t" style="left:1080.7px;top:382.23px;width:89.2px;height:15.07px;line-height:15.07px;text-align:center;font-size:9px;color:#2a2a2a;-webkit-text-stroke:.2px #2a2a2a;"><span style="transform:matrix(1.036,.0005,0,1,0,0);transform-origin:50% 50%">LATE SHORT</span></div>
<div class="t" style="left:1178.1px;top:382.23px;width:27.9px;height:15.07px;line-height:15.07px;text-align:center;font-size:9px;color:#2a2a2a;-webkit-text-stroke:.2px #2a2a2a;"><span style="transform:matrix(1.036,.0005,0,1,0,0);transform-origin:50% 50%">L</span></div>
<div class="t" style="left:1207.8px;top:382.23px;width:84.4px;height:15.07px;line-height:15.07px;text-align:center;font-size:9px;color:#2a2a2a;-webkit-text-stroke:.2px #2a2a2a;"><span style="transform:matrix(1.036,.0005,0,1,0,0);transform-origin:50% 50%">1530-2200</span></div>
<div class="t" style="left:1293.6px;top:382.23px;width:28.4px;height:15.07px;line-height:15.07px;text-align:center;font-size:9px;color:#2a2a2a;-webkit-text-stroke:.2px #2a2a2a;"><span style="transform:matrix(1.036,.0005,0,1,0,0);transform-origin:50% 50%">8.0</span></div>
<div class="t" style="left:1178.1px;top:397.3px;width:27.9px;height:15.07px;line-height:15.07px;text-align:center;font-size:9px;color:#2a2a2a;-webkit-text-stroke:.2px #2a2a2a;"><span style="transform:matrix(1.036,.0005,0,1,0,0);transform-origin:50% 50%">B</span></div>
<div class="t" style="left:1293.6px;top:397.3px;width:28.4px;height:15.07px;line-height:15.07px;text-align:center;font-size:9px;color:#2a2a2a;-webkit-text-stroke:.2px #2a2a2a;"><span style="transform:matrix(1.036,.0005,0,1,0,0);transform-origin:50% 50%">8.0</span></div>
<div class="t" style="left:1178.1px;top:412.37px;width:27.9px;height:15.07px;line-height:15.07px;text-align:center;font-size:9px;color:#2a2a2a;-webkit-text-stroke:.2px #2a2a2a;"><span style="transform:matrix(1.036,.0005,0,1,0,0);transform-origin:50% 50%">9T</span></div>
<div class="t" style="left:1293.6px;top:412.37px;width:28.4px;height:15.07px;line-height:15.07px;text-align:center;font-size:9px;color:#2a2a2a;-webkit-text-stroke:.2px #2a2a2a;"><span style="transform:matrix(1.036,.0005,0,1,0,0);transform-origin:50% 50%">6.0</span></div>
<div style="left:1080.7px;top:456.83px;width:89.2px;height:89.22px;background:#bdefff;"></div>
<div style="left:1178.1px;top:457.93px;width:27.9px;height:88.12px;background:#bdefff;"></div>
<div style="left:1207.8px;top:457.93px;width:84.4px;height:88.12px;background:#bdefff;"></div>
<div style="left:1293.6px;top:457.93px;width:28.4px;height:88.12px;background:#bdefff;"></div>
<div style="left:1080px;top:470.7px;width:243px;height:2.3px;background:#fff;"></div>
<div style="left:1080px;top:485.77px;width:243px;height:2.3px;background:#fff;"></div>
<div style="left:1080px;top:500.84px;width:243px;height:2.3px;background:#fff;"></div>
<div style="left:1080px;top:515.91px;width:243px;height:2.3px;background:#fff;"></div>
<div style="left:1080px;top:530.98px;width:243px;height:2.3px;background:#fff;"></div>
<div class="t" style="left:1080.7px;top:456.63px;width:89.2px;height:15.07px;line-height:15.07px;text-align:center;font-size:9.6px;font-weight:700;color:#111;"><span style="transform:matrix(0.97,.0005,0,1,0,0);transform-origin:50% 50%">Night Shift</span></div>
<div class="t" style="left:1178.1px;top:456.63px;width:27.9px;height:15.07px;line-height:15.07px;text-align:center;font-size:9.6px;font-weight:700;color:#111;"><span style="transform:matrix(0.97,.0005,0,1,0,0);transform-origin:50% 50%">Code</span></div>
<div class="t" style="left:1207.8px;top:456.63px;width:84.4px;height:15.07px;line-height:15.07px;text-align:center;font-size:9.6px;font-weight:700;color:#111;"><span style="transform:matrix(0.97,.0005,0,1,0,0);transform-origin:50% 50%">Time of Shift</span></div>
<div class="t" style="left:1293.6px;top:456.63px;width:28.4px;height:15.07px;line-height:15.07px;text-align:center;font-size:9.6px;font-weight:700;color:#111;"><span style="transform:matrix(0.97,.0005,0,1,0,0);transform-origin:50% 50%">Hrs</span></div>
<div class="t" style="left:1080.7px;top:472.65px;width:89.2px;height:15.07px;line-height:15.07px;text-align:center;font-size:9px;color:#2a2a2a;-webkit-text-stroke:.2px #2a2a2a;"><span style="transform:matrix(1.036,.0005,0,1,0,0);transform-origin:50% 50%">long night</span></div>
<div class="t" style="left:1178.1px;top:472.65px;width:27.9px;height:15.07px;line-height:15.07px;text-align:center;font-size:9px;color:#2a2a2a;-webkit-text-stroke:.2px #2a2a2a;"><span style="transform:matrix(1.036,.0005,0,1,0,0);transform-origin:50% 50%">N</span></div>
<div class="t" style="left:1207.8px;top:472.65px;width:84.4px;height:15.07px;line-height:15.07px;text-align:center;font-size:9px;color:#2a2a2a;-webkit-text-stroke:.2px #2a2a2a;"><span style="transform:matrix(1.036,.0005,0,1,0,0);transform-origin:50% 50%">2130-0730</span></div>
<div class="t" style="left:1293.6px;top:472.65px;width:28.4px;height:15.07px;line-height:15.07px;text-align:center;font-size:9px;color:#2a2a2a;-webkit-text-stroke:.2px #2a2a2a;"><span style="transform:matrix(1.036,.0005,0,1,0,0);transform-origin:50% 50%">8.0</span></div>
<div class="t" style="left:1178.1px;top:487.72px;width:27.9px;height:15.07px;line-height:15.07px;text-align:center;font-size:9px;color:#2a2a2a;-webkit-text-stroke:.2px #2a2a2a;"><span style="transform:matrix(1.036,.0005,0,1,0,0);transform-origin:50% 50%">S</span></div>
<div class="t" style="left:1293.6px;top:487.72px;width:28.4px;height:15.07px;line-height:15.07px;text-align:center;font-size:9px;color:#2a2a2a;-webkit-text-stroke:.2px #2a2a2a;"><span style="transform:matrix(1.036,.0005,0,1,0,0);transform-origin:50% 50%">10.0</span></div>
<div class="t" style="left:1178.1px;top:502.79px;width:27.9px;height:15.07px;line-height:15.07px;text-align:center;font-size:9px;color:#2a2a2a;-webkit-text-stroke:.2px #2a2a2a;"><span style="transform:matrix(1.036,.0005,0,1,0,0);transform-origin:50% 50%">SS</span></div>
<div class="t" style="left:1293.6px;top:502.79px;width:28.4px;height:15.07px;line-height:15.07px;text-align:center;font-size:9px;color:#2a2a2a;-webkit-text-stroke:.2px #2a2a2a;"><span style="transform:matrix(1.036,.0005,0,1,0,0);transform-origin:50% 50%">10.0</span></div>
<div style="left:1080.7px;top:562.32px;width:89.2px;height:89.22px;background:#ececec;"></div>
<div style="left:1178.1px;top:563.42px;width:27.9px;height:88.12px;background:#ececec;"></div>
<div style="left:1207.8px;top:563.42px;width:84.4px;height:88.12px;background:#ececec;"></div>
<div style="left:1293.6px;top:563.42px;width:28.4px;height:88.12px;background:#ececec;"></div>
<div style="left:1080px;top:576.19px;width:243px;height:2.3px;background:#fff;"></div>
<div style="left:1080px;top:591.26px;width:243px;height:2.3px;background:#fff;"></div>
<div style="left:1080px;top:606.33px;width:243px;height:2.3px;background:#fff;"></div>
<div style="left:1080px;top:621.4px;width:243px;height:2.3px;background:#fff;"></div>
<div style="left:1080px;top:636.47px;width:243px;height:2.3px;background:#fff;"></div>
<div style="left:1178.1px;top:578.49px;width:27.9px;height:12.77px;background:#ffdf33;"></div>
<div style="left:1178.1px;top:593.56px;width:27.9px;height:12.77px;background:#00b0f0;"></div>
<div style="left:1178.1px;top:608.63px;width:27.9px;height:12.77px;background:#f054b0;"></div>
<div style="left:1178.1px;top:623.7px;width:27.9px;height:12.77px;background:#00e6c3;"></div>
<div style="left:1178.1px;top:638.77px;width:27.9px;height:12.77px;background:#9a5be0;"></div>
<div class="t" style="left:1080.7px;top:562.12px;width:89.2px;height:15.07px;line-height:15.07px;text-align:center;font-size:9.6px;font-weight:700;color:#111;"><span style="transform:matrix(0.97,.0005,0,1,0,0);transform-origin:50% 50%">Non-Productive</span></div>
<div class="t" style="left:1178.1px;top:562.12px;width:27.9px;height:15.07px;line-height:15.07px;text-align:center;font-size:9.6px;font-weight:700;color:#111;"><span style="transform:matrix(0.97,.0005,0,1,0,0);transform-origin:50% 50%">Code</span></div>
<div class="t" style="left:1207.8px;top:562.12px;width:84.4px;height:15.07px;line-height:15.07px;text-align:center;font-size:9.6px;font-weight:700;color:#111;"><span style="transform:matrix(0.97,.0005,0,1,0,0);transform-origin:50% 50%">Time of Shift</span></div>
<div class="t" style="left:1293.6px;top:562.12px;width:28.4px;height:15.07px;line-height:15.07px;text-align:center;font-size:9.6px;font-weight:700;color:#111;"><span style="transform:matrix(0.97,.0005,0,1,0,0);transform-origin:50% 50%">Hrs</span></div>
<div class="t" style="left:1080.7px;top:578.14px;width:89.2px;height:15.07px;line-height:15.07px;text-align:center;font-size:9px;color:#2a2a2a;-webkit-text-stroke:.2px #2a2a2a;"><span style="transform:matrix(1.036,.0005,0,1,0,0);transform-origin:50% 50%">Roster day off</span></div>
<div class="t" style="left:1178.1px;top:578.14px;width:27.9px;height:15.07px;line-height:15.07px;text-align:center;font-size:9px;color:#222;-webkit-text-stroke:.2px #222;"><span style="transform:matrix(1.036,.0005,0,1,0,0);transform-origin:50% 50%">ADO</span></div>
<div class="t" style="left:1207.8px;top:578.14px;width:84.4px;height:15.07px;line-height:15.07px;text-align:center;font-size:9px;color:#2a2a2a;-webkit-text-stroke:.2px #2a2a2a;"><span style="transform:matrix(1.036,.0005,0,1,0,0);transform-origin:50% 50%">0800-1630</span></div>
<div class="t" style="left:1293.6px;top:578.14px;width:28.4px;height:15.07px;line-height:15.07px;text-align:center;font-size:9px;color:#2a2a2a;-webkit-text-stroke:.2px #2a2a2a;"><span style="transform:matrix(1.036,.0005,0,1,0,0);transform-origin:50% 50%">8.0</span></div>
<div class="t" style="left:1080.7px;top:593.21px;width:89.2px;height:15.07px;line-height:15.07px;text-align:center;font-size:9px;color:#2a2a2a;-webkit-text-stroke:.2px #2a2a2a;"><span style="transform:matrix(1.036,.0005,0,1,0,0);transform-origin:50% 50%">Annual Leave</span></div>
<div class="t" style="left:1178.1px;top:593.21px;width:27.9px;height:15.07px;line-height:15.07px;text-align:center;font-size:9px;color:#e8f6ff;-webkit-text-stroke:.2px #e8f6ff;"><span style="transform:matrix(1.036,.0005,0,1,0,0);transform-origin:50% 50%">AL</span></div>
<div class="t" style="left:1207.8px;top:593.21px;width:84.4px;height:15.07px;line-height:15.07px;text-align:center;font-size:9px;color:#2a2a2a;-webkit-text-stroke:.2px #2a2a2a;"><span style="transform:matrix(1.036,.0005,0,1,0,0);transform-origin:50% 50%">0800-1630</span></div>
<div class="t" style="left:1293.6px;top:593.21px;width:28.4px;height:15.07px;line-height:15.07px;text-align:center;font-size:9px;color:#2a2a2a;-webkit-text-stroke:.2px #2a2a2a;"><span style="transform:matrix(1.036,.0005,0,1,0,0);transform-origin:50% 50%">8.0</span></div>
<div class="t" style="left:1080.7px;top:608.28px;width:89.2px;height:15.07px;line-height:15.07px;text-align:center;font-size:9px;color:#2a2a2a;-webkit-text-stroke:.2px #2a2a2a;"><span style="transform:matrix(1.036,.0005,0,1,0,0);transform-origin:50% 50%">Maternity Leave</span></div>
<div class="t" style="left:1178.1px;top:608.28px;width:27.9px;height:15.07px;line-height:15.07px;text-align:center;font-size:9px;color:#ffe6f5;-webkit-text-stroke:.2px #ffe6f5;"><span style="transform:matrix(1.036,.0005,0,1,0,0);transform-origin:50% 50%">ML</span></div>
<div class="t" style="left:1207.8px;top:608.28px;width:84.4px;height:15.07px;line-height:15.07px;text-align:center;font-size:9px;color:#2a2a2a;-webkit-text-stroke:.2px #2a2a2a;"><span style="transform:matrix(1.036,.0005,0,1,0,0);transform-origin:50% 50%">0800-1630</span></div>
<div class="t" style="left:1293.6px;top:608.28px;width:28.4px;height:15.07px;line-height:15.07px;text-align:center;font-size:9px;color:#2a2a2a;-webkit-text-stroke:.2px #2a2a2a;"><span style="transform:matrix(1.036,.0005,0,1,0,0);transform-origin:50% 50%">8.0</span></div>
<div class="t" style="left:1080.7px;top:623.35px;width:89.2px;height:15.07px;line-height:15.07px;text-align:center;font-size:9px;color:#2a2a2a;-webkit-text-stroke:.2px #2a2a2a;"><span style="transform:matrix(1.036,.0005,0,1,0,0);transform-origin:50% 50%">Education Leave</span></div>
<div class="t" style="left:1178.1px;top:623.35px;width:27.9px;height:15.07px;line-height:15.07px;text-align:center;font-size:9px;color:#e6fffa;-webkit-text-stroke:.2px #e6fffa;"><span style="transform:matrix(1.036,.0005,0,1,0,0);transform-origin:50% 50%">EL</span></div>
<div class="t" style="left:1207.8px;top:623.35px;width:84.4px;height:15.07px;line-height:15.07px;text-align:center;font-size:9px;color:#2a2a2a;-webkit-text-stroke:.2px #2a2a2a;"><span style="transform:matrix(1.036,.0005,0,1,0,0);transform-origin:50% 50%">0800-1630</span></div>
<div class="t" style="left:1293.6px;top:623.35px;width:28.4px;height:15.07px;line-height:15.07px;text-align:center;font-size:9px;color:#2a2a2a;-webkit-text-stroke:.2px #2a2a2a;"><span style="transform:matrix(1.036,.0005,0,1,0,0);transform-origin:50% 50%">8.0</span></div>
<div class="t" style="left:1080.7px;top:638.42px;width:89.2px;height:15.07px;line-height:15.07px;text-align:center;font-size:9px;color:#2a2a2a;-webkit-text-stroke:.2px #2a2a2a;"><span style="transform:matrix(1.036,.0005,0,1,0,0);transform-origin:50% 50%">Long Service Leave</span></div>
<div class="t" style="left:1178.1px;top:638.42px;width:27.9px;height:15.07px;line-height:15.07px;text-align:center;font-size:9px;color:#f0e6ff;-webkit-text-stroke:.2px #f0e6ff;"><span style="transform:matrix(1.036,.0005,0,1,0,0);transform-origin:50% 50%">LSL</span></div>
<div class="t" style="left:1207.8px;top:638.42px;width:84.4px;height:15.07px;line-height:15.07px;text-align:center;font-size:9px;color:#2a2a2a;-webkit-text-stroke:.2px #2a2a2a;"><span style="transform:matrix(1.036,.0005,0,1,0,0);transform-origin:50% 50%">0800-1630</span></div>
<div class="t" style="left:1293.6px;top:638.42px;width:28.4px;height:15.07px;line-height:15.07px;text-align:center;font-size:9px;color:#2a2a2a;-webkit-text-stroke:.2px #2a2a2a;"><span style="transform:matrix(1.036,.0005,0,1,0,0);transform-origin:50% 50%">8.0</span></div>
<div style="left:1331px;top:246.8px;width:96.3px;height:14.17px;background:#ffc000;"></div>
<div class="t" style="left:1331px;top:246.5px;width:96.3px;height:14.47px;overflow:hidden;line-height:16.4px;font-size:12.7px;color:#fff;padding-left:2.2px;"><span style="transform:matrix(1.084,.0005,0,1,0,0);transform-origin:0 50%">Holiday</span></div>
<div class="t" style="left:1331px;top:261.57px;width:96.3px;height:15.07px;background:#dadada;overflow:hidden;line-height:16px;font-size:11.8px;font-weight:700;color:#1c2430;-webkit-text-stroke:.15px #1c2430;padding-left:2.6px;"><span style="transform:matrix(.96,.0005,0,1,0,0);transform-origin:0 50%">New Year's Day</span></div>
<div class="t" style="left:1331px;top:276.64px;width:96.3px;height:15.07px;background:#ececec;overflow:hidden;line-height:16px;font-size:11.8px;font-weight:700;color:#1c2430;-webkit-text-stroke:.15px #1c2430;padding-left:2.6px;"><span style="transform:matrix(.96,.0005,0,1,0,0);transform-origin:0 50%">Good Friday</span></div>
<div class="t" style="left:1331px;top:291.71px;width:96.3px;height:15.07px;background:#dadada;overflow:hidden;line-height:16px;font-size:11.8px;font-weight:700;color:#1c2430;-webkit-text-stroke:.15px #1c2430;padding-left:2.6px;"><span style="transform:matrix(.96,.0005,0,1,0,0);transform-origin:0 50%">Easter Saturday</span></div>
<div class="t" style="left:1331px;top:306.78px;width:96.3px;height:15.07px;background:#ececec;overflow:hidden;line-height:16px;font-size:11.8px;font-weight:700;color:#1c2430;-webkit-text-stroke:.15px #1c2430;padding-left:2.6px;"><span style="transform:matrix(.96,.0005,0,1,0,0);transform-origin:0 50%">Easter Sunday</span></div>
<div class="t" style="left:1331px;top:321.85px;width:96.3px;height:15.07px;background:#dadada;overflow:hidden;line-height:16px;font-size:11.8px;font-weight:700;color:#1c2430;-webkit-text-stroke:.15px #1c2430;padding-left:2.6px;"><span style="transform:matrix(.96,.0005,0,1,0,0);transform-origin:0 50%">Easter Monday</span></div>
<div class="t" style="left:1331px;top:336.92px;width:96.3px;height:15.07px;background:#ececec;overflow:hidden;line-height:16px;font-size:11.8px;font-weight:700;color:#1c2430;-webkit-text-stroke:.15px #1c2430;padding-left:2.6px;"><span style="transform:matrix(.96,.0005,0,1,0,0);transform-origin:0 50%">Anzac Day</span></div>
<div class="t" style="left:1331px;top:351.99px;width:96.3px;height:15.07px;background:#dadada;overflow:hidden;line-height:16px;font-size:11.8px;font-weight:700;color:#1c2430;-webkit-text-stroke:.15px #1c2430;padding-left:2.6px;"><span style="transform:matrix(.96,.0005,0,1,0,0);transform-origin:0 50%">Queen's Birthday</span></div>
<div class="t" style="left:1331px;top:367.06px;width:96.3px;height:15.07px;background:#ececec;overflow:hidden;line-height:16px;font-size:11.8px;font-weight:700;color:#1c2430;-webkit-text-stroke:.15px #1c2430;padding-left:2.6px;"><span style="transform:matrix(.96,.0005,0,1,0,0);transform-origin:0 50%">Labour Day</span></div>
<div class="t" style="left:1331px;top:382.13px;width:96.3px;height:15.07px;background:#dadada;overflow:hidden;line-height:16px;font-size:11.8px;font-weight:700;color:#1c2430;-webkit-text-stroke:.15px #1c2430;padding-left:2.6px;"><span style="transform:matrix(.96,.0005,0,1,0,0);transform-origin:0 50%">Christmas Day</span></div>
<div class="t" style="left:1331px;top:397.2px;width:96.3px;height:15.07px;background:#ececec;overflow:hidden;line-height:16px;font-size:11.8px;font-weight:700;color:#1c2430;-webkit-text-stroke:.15px #1c2430;padding-left:2.6px;"><span style="transform:matrix(.96,.0005,0,1,0,0);transform-origin:0 50%">Boxing Day</span></div>
<div class="t" style="left:1331px;top:412.27px;width:96.3px;height:15.07px;background:#dadada;overflow:hidden;line-height:16px;font-size:11.8px;font-weight:700;color:#1c2430;-webkit-text-stroke:.15px #1c2430;padding-left:2.6px;"><span style="transform:matrix(.96,.0005,0,1,0,0);transform-origin:0 50%">Additional day 1</span></div>
<div class="t" style="left:1331px;top:427.34px;width:96.3px;height:15.07px;background:#ececec;overflow:hidden;line-height:16px;font-size:11.8px;font-weight:700;color:#1c2430;-webkit-text-stroke:.15px #1c2430;padding-left:2.6px;"><span style="transform:matrix(.96,.0005,0,1,0,0);transform-origin:0 50%">Additional day 2</span></div>
<div class="t" style="left:1331px;top:442.41px;width:96.3px;height:15.07px;background:#dadada;overflow:hidden;line-height:16px;font-size:11.8px;font-weight:700;color:#1c2430;-webkit-text-stroke:.15px #1c2430;padding-left:2.6px;"><span style="transform:matrix(.96,.0005,0,1,0,0);transform-origin:0 50%">Additional day 3</span></div>
<div class="t" style="left:1331px;top:457.48px;width:96.3px;height:15.07px;background:#ececec;overflow:hidden;line-height:16px;font-size:11.8px;font-weight:700;color:#1c2430;-webkit-text-stroke:.15px #1c2430;padding-left:2.6px;"><span style="transform:matrix(.96,.0005,0,1,0,0);transform-origin:0 50%">Additional day 4</span></div>
<div class="t" style="left:1331px;top:472.55px;width:96.3px;height:15.07px;background:#dadada;overflow:hidden;line-height:16px;font-size:11.8px;font-weight:700;color:#1c2430;-webkit-text-stroke:.15px #1c2430;padding-left:2.6px;"><span style="transform:matrix(.96,.0005,0,1,0,0);transform-origin:0 50%">Additional day 5</span></div>
<div class="t" style="left:1331px;top:487.62px;width:96.3px;height:15.07px;background:#ececec;overflow:hidden;line-height:16px;font-size:11.8px;font-weight:700;color:#1c2430;-webkit-text-stroke:.15px #1c2430;padding-left:2.6px;"><span style="transform:matrix(.96,.0005,0,1,0,0);transform-origin:0 50%">Additional day 6</span></div>
<div class="t" style="left:1331px;top:502.69px;width:96.3px;height:15.07px;background:#dadada;overflow:hidden;line-height:16px;font-size:11.8px;font-weight:700;color:#1c2430;-webkit-text-stroke:.15px #1c2430;padding-left:2.6px;"><span style="transform:matrix(.96,.0005,0,1,0,0);transform-origin:0 50%">Additional day 7</span></div>
<div class="t" style="left:1331px;top:517.76px;width:96.3px;height:15.07px;background:#ececec;overflow:hidden;line-height:16px;font-size:11.8px;font-weight:700;color:#1c2430;-webkit-text-stroke:.15px #1c2430;padding-left:2.6px;"><span style="transform:matrix(.96,.0005,0,1,0,0);transform-origin:0 50%">Additional day 8</span></div>
<div class="t" style="left:1331px;top:532.83px;width:96.3px;height:15.07px;background:#dadada;overflow:hidden;line-height:16px;font-size:11.8px;font-weight:700;color:#1c2430;-webkit-text-stroke:.15px #1c2430;padding-left:2.6px;"><span style="transform:matrix(.96,.0005,0,1,0,0);transform-origin:0 50%">Additional day 9</span></div>
<div class="t" style="left:1331px;top:547.9px;width:96.3px;height:15.07px;background:#ececec;overflow:hidden;line-height:16px;font-size:11.8px;font-weight:700;color:#1c2430;-webkit-text-stroke:.15px #1c2430;padding-left:2.6px;"><span style="transform:matrix(.96,.0005,0,1,0,0);transform-origin:0 50%">Additional day 10</span></div>
<div style="left:0px;top:230.55px;width:1px;height:508.95px;background:#ababab;"></div>
<!-- ===== Excel header ===== -->
<div style="left:0;top:0;width:1445px;height:48px;background:#217346;"></div>
<!-- decorative sea creatures (darker green) -->
<svg style="left:1040px;top:0" width="405" height="48" viewBox="0 0 405 48" fill="#1d6c40">
  <circle cx="66" cy="9" r="2.5"/><circle cx="91" cy="25" r="1.6"/>
  <ellipse cx="32" cy="22" rx="8" ry="4"/><ellipse cx="127" cy="24" rx="5" ry="6"/><rect x="123" y="26" width="8" height="8" rx="2"/>
  <ellipse cx="155" cy="11" rx="10" ry="6"/><path d="M142 8l-5-5 3 8zM168 8l5-5-3 8zM146 17l-5 5M164 17l5 5" stroke="#1d6c40" stroke-width="2"/>
  <ellipse cx="200" cy="24" rx="17" ry="6.5"/><rect x="193" y="14" width="10" height="8" rx="3"/>
  <ellipse cx="245" cy="27" rx="7" ry="3.5"/>
  <ellipse cx="277" cy="11" rx="11" ry="10"/><path d="M268 18c-3 8-6 9-8 12M273 20c-1 7-2 9-3 12M281 20c1 7 2 9 3 12M286 18c3 8 6 9 8 12" stroke="#1d6c40" stroke-width="3.2" fill="none" stroke-linecap="round"/>
  <ellipse cx="307" cy="19" rx="6" ry="3"/>
  <ellipse cx="333" cy="9" rx="17" ry="6.5"/><rect x="326" y="0" width="10" height="6" rx="2"/><path d="M349 9l8-6v12z"/>
  <circle cx="367" cy="26" r="8"/><circle cx="337" cy="22" r="2.5"/><circle cx="361" cy="5" r="1.8"/>
  <path d="M395 0l10 0 0 8c-6-1-9-4-10-8z"/>
</svg>

<!-- QAT icons -->
<svg style="left:0;top:0" width="110" height="24" viewBox="0 0 110 24" fill="none" stroke-linecap="round" stroke-linejoin="round">
<g stroke="#fff" stroke-width="1.3" stroke-linejoin="miter" stroke-linecap="butt"><path d="M16.850 7.650h8.300l1.200 1.200v8.300h-9.500z"/><path d="M18.700 7.800v3.400h5.800V7.800M18.700 17v-3.700h5.800V17"/><path d="M20.600 17v-1.500h1.800" stroke-width="1"/></g>
<path d="M42.400 7.300L38.500 10.700l3.900 3.300M38.900 10.700h5.800c2.300 0 3.800 1.400 3.800 3.100 0 1.700-1.400 3-3.500 3.100" stroke="#fff" stroke-width="1.600"/>
<path d="M53.900 11.200l2 1.800 2-1.800" stroke="#a8d4ba" stroke-width="1.100"/>
<path d="M73.800 7.300l3.900 3.400-3.900 3.300M77.300 10.700h-5.800c-2.300 0-3.800 1.400-3.800 3.100 0 1.700 1.400 3 3.500 3.100" stroke="#4c9a6f" stroke-width="1.600"/>
<path d="M83.300 11.200l2 1.800 2-1.800" stroke="#3f8f63" stroke-width="1.100"/>
<path d="M99.700 10.500h4" stroke="#e8f3ec" stroke-width="1.100" stroke-linecap="butt"/><path d="M99.600 12.500h4.200l-2.100 2.300z" fill="#e8f3ec" stroke="none"/>
</svg>
<!-- title -->
<div class="t" style="left:638.5px;top:6px;width:167px;height:16px;line-height:16px;font-size:10px;color:#c3d9cc;"><span style="transform:matrix(.862,.0005,0,1,0,0);transform-origin:0 50%">4 Week View Roster template.xlsm&nbsp; -&nbsp; Excel</span></div>
<div class="t" style="left:1200px;top:5.2px;width:72px;height:16px;line-height:16px;font-size:10px;color:#d5e5dc;text-align:right;"><span style="transform:matrix(.808,.0005,0,1,0,0);transform-origin:100% 50%">Excelerate AU</span></div>
<!-- avatar -->
<div style="left:1279.4px;top:3.6px;width:18px;height:18px;border-radius:50%;background:#f1efef;"></div>
<svg style="left:1279.4px;top:3.6px" width="18" height="18" viewBox="0 0 18 18"><circle cx="4.900" cy="3.700" r="1.100" fill="#f5d21f"/><ellipse cx="8.500" cy="3.200" rx="1.500" ry="1" fill="#222"/><circle cx="13.400" cy="3.700" r="1.300" fill="#c8102e"/><circle cx="11" cy="1.600" r=".8" fill="#7fd0ee"/><rect x="2.500" y="5.300" width="2" height="1.500" fill="#1b8fd6"/><rect x="2.500" y="7.200" width="2.200" height="1.100" fill="#2a9d48"/><ellipse cx="5.600" cy="10" rx="1.800" ry=".9" fill="#f28c1c"/><circle cx="9" cy="7.500" r="2.300" fill="#fdfdfd"/><circle cx="13.700" cy="7.300" r=".7" fill="#333"/><path d="M8 9.800l3.300 .5-.8 2.600-2.300-.3z" fill="#1d9be0"/><path d="M7.600 9.500l1.300 .5-1.200 1.200zM9.300 12.600l.3 2.800M8.200 15.700h2.500" stroke="#333" stroke-width=".9" fill="#333"/></svg>
<!-- window controls -->
<svg style="left:1317.6px;top:6.6px" width="11" height="9" viewBox="0 0 12 10" fill="none" stroke="#a5ccb6" stroke-width="1.1"><rect x=".5" y=".5" width="11" height="9"/><path d="M.5 3h11M6 4.5v3.2M4.4 6L6 4.4 7.6 6"/></svg>
<div style="left:1354.5px;top:10.3px;width:7.3px;height:1px;background:#a9d3bb;"></div>
<svg style="left:1389px;top:6.9px" width="8" height="8" viewBox="0 0 10 10" fill="none" stroke="#a9d3bb" stroke-width="1.25"><rect x=".5" y="2.5" width="7" height="7" rx="1"/><path d="M2.5 2.5V1.5a1 1 0 011-1h5a1 1 0 011 1v5a1 1 0 01-1 1h-1"/></svg>
<svg style="left:1423.6px;top:7.1px" width="8" height="8" viewBox="0 0 10 10" fill="none" stroke="#b4d9c4" stroke-width="1.25"><path d="M.5.5l9 9M9.500 .5l-9 9"/></svg>
<svg style="left:1421px;top:30.200px" width="13" height="11.500" viewBox="0 0 13 12" fill="none" stroke="#e4f1e9" stroke-width="1.2" stroke-linejoin="round"><path d="M.6.6h11.8v7.6H5.6L3.2 10.8V8.200H.6z"/></svg>

<!-- ribbon tabs -->
<div class="t rt" style="left:15px;"><span style="transform:matrix(0.831,.0005,0,1,0,0)">File</span></div>
<div class="t rt" style="left:54.6px;"><span style="transform:matrix(0.933,.0005,0,1,0,0)">Home</span></div>
<div class="t rt" style="left:99.6px;"><span style="transform:matrix(0.871,.0005,0,1,0,0)">Insert</span></div>
<div class="t rt" style="left:142.2px;"><span style="transform:matrix(0.869,.0005,0,1,0,0)">Page Layout</span></div>
<div class="t rt" style="left:211.3px;"><span style="transform:matrix(0.880,.0005,0,1,0,0)">Formulas</span></div>
<div class="t rt" style="left:268.4px;"><span style="transform:matrix(0.857,.0005,0,1,0,0)">Data</span></div>
<div class="t rt" style="left:307.2px;"><span style="transform:matrix(0.842,.0005,0,1,0,0)">Review</span></div>
<div class="t rt" style="left:354.9px;"><span style="transform:matrix(0.870,.0005,0,1,0,0)">View</span></div>
<div class="t rt" style="left:394.5px;"><span style="transform:matrix(0.871,.0005,0,1,0,0)">Developer</span></div>
<div class="t rt" style="left:454.7px;"><span style="transform:matrix(0.889,.0005,0,1,0,0)">Help</span></div>
<div class="t rt" style="left:493.6px;"><span style="transform:matrix(0.911,.0005,0,1,0,0)">Acrobat</span></div>
<div class="t rt" style="left:545.7px;"><span style="transform:matrix(0.886,.0005,0,1,0,0)">Power Pivot</span></div>
<svg style="left:614.5px;top:29px" width="11" height="15" viewBox="0 0 11 15" fill="none" stroke="#fff" stroke-width="1.1"><path d="M5.500 .7a4.300 4.300 0 00-2.600 7.700c.6.600.900 1.200.9 2.100h3.400c0-.9.300-1.500.9-2.100A4.300 4.300 0 005.500.7z"/><path d="M3.900 12.300h3.200M4.300 14h2.400"/></svg>
<div class="t rt" style="left:635px;font-weight:700;font-size:10px;-webkit-text-stroke:0;"><span style="transform:matrix(.856,.0005,0,1,0,0)">Tell me what you want to do</span></div>

<!-- ===== vertical scrollbar ===== -->
<div style="left:1427.4px;top:48px;width:17.6px;height:691px;background:#f0f0f0;border-left:1px solid #c6c6c6;"></div>
<div style="left:1431px;top:50px;width:12px;height:11px;background:#fff;border:1px solid #ababab;border-radius:1px;"></div>
<svg style="left:1434px;top:53.5px" width="6" height="3.5" viewBox="0 0 6 4" fill="#222"><path d="M0 4L3 .3 6 4z"/></svg>
<div style="left:1431px;top:728.500px;width:12px;height:11px;background:#fff;border:1px solid #ababab;border-radius:1px;"></div>
<svg style="left:1434px;top:732px" width="6" height="4" viewBox="0 0 6 4" fill="#222"><path d="M0 0L3 3.700 6 0z"/></svg>
<div style="left:1431px;top:305px;width:12px;height:289px;background:#fff;border:1px solid #ababab;border-radius:1.5px;"></div>

<!-- ===== sheet tab bar ===== -->
<div style="left:0;top:739px;width:1445px;height:21.500px;background:#e6e6e6;border-top:1px solid #a6a6a6;"></div>
<svg style="left:19.500px;top:746px" width="4" height="7" viewBox="0 0 4 7" fill="#c3c3c3"><path d="M4 0L0 3.500 4 7z"/></svg>
<svg style="left:41px;top:746px" width="4" height="7" viewBox="0 0 4 7" fill="#c3c3c3"><path d="M0 0l4 3.500L0 7z"/></svg>
<div style="left:75px;top:742px;width:1px;height:16px;background:#9d9d9d;"></div>
<div style="left:77.2px;top:741.5px;width:90.6px;height:16px;background:#ffff00;"></div>
<div class="t" style="left:77.2px;top:742.5px;width:90.6px;height:16px;line-height:14.5px;text-align:center;font-size:10.4px;color:#33330a;-webkit-text-stroke:.2px #33330a;"><span style="transform:matrix(.952,.0005,0,1,0,0);transform-origin:50% 50%">Roster Template</span></div>
<div style="left:169px;top:738.6px;width:101px;height:19.6px;background:linear-gradient(180deg,#fff 0,#fff 15%,#ffffe6 50%,#ffffa6 100%);border-right:1px solid #a6a6a6;border-left:1px solid #b5b5b5;border-bottom:2px solid #217346;"></div>
<div class="t" style="left:169.4px;top:742.500px;width:100.1px;height:16px;line-height:14.5px;text-align:center;font-size:10.4px;font-weight:700;color:#1f6e43;"><span style="transform:matrix(.936,.0005,0,1,0,0);transform-origin:50% 50%">Protected Version</span></div>
<svg style="left:294px;top:743px" width="13" height="13" viewBox="0 0 13 13" fill="none" stroke="#5e5e5e" stroke-width="1"><circle cx="6.500" cy="6.500" r="5.700"/><path d="M6.500 3.500v6M3.500 6.500h6"/></svg>
<!-- horizontal scrollbar -->
<div style="left:867px;top:745.8px;width:1.1px;height:1.2px;background:#8a8a8a;"></div><div style="left:867px;top:748.9px;width:1.1px;height:1.2px;background:#8a8a8a;"></div><div style="left:867px;top:752px;width:1.1px;height:1.2px;background:#8a8a8a;"></div>
<div style="left:895px;top:740px;width:533px;height:20px;background:#f0f0f0;"></div><div style="left:879.500px;top:744.3px;width:11.2px;height:11.2px;background:#fff;border:1px solid #ababab;"></div>
<svg style="left:882.5px;top:747px" width="4" height="6" viewBox="0 0 4 6" fill="#222"><path d="M4 0L.3 3 4 6z"/></svg>
<div style="left:902.5px;top:744.5px;width:457px;height:11px;background:#fff;border:1px solid #ababab;"></div>
<div style="left:1417.5px;top:744.5px;width:11px;height:11px;background:#fff;border:1px solid #ababab;"></div>
<svg style="left:1421.500px;top:747px" width="4" height="6" viewBox="0 0 4 6" fill="#222"><path d="M0 0l3.700 3L0 6z"/></svg>

<!-- ===== status bar ===== -->
<div style="left:0;top:760px;width:1445px;height:17px;background:#f3f3f3;border-top:1px solid #d4d4d4;"></div>
<div class="t" style="left:8.4px;top:761px;height:16px;line-height:16px;font-size:9px;color:#2a2a2a;-webkit-text-stroke:.2px #2a2a2a;"><span style="transform:matrix(.884,.0005,0,1,0,0);transform-origin:0 50%">Ready</span></div>
<svg style="left:46.5px;top:763.500px" width="10" height="10" viewBox="0 0 10 10" fill="none" stroke="#555" stroke-width=".9"><rect x=".5" y="2.500" width="9" height="7"/><path d="M.5 5h9M3.500 2.500v7M6.500 5v4.500"/><circle cx="2" cy="1.700" r="1.400" fill="#555" stroke="none"/></svg>
<svg style="left:69.5px;top:763px" width="12" height="11" viewBox="0 0 12 11" fill="none" stroke="#444" stroke-width="1" stroke-linecap="round"><path d="M6.500 1.300a4 4 0 10.5 7.500"/><circle cx="5.500" cy="3" r=".9" fill="#444" stroke="none"/><path d="M3.300 4.600h4.400M5.500 4.600v2.600M7 7l4 3.500M11 7l-4 3.500"/></svg>
<div class="t" style="left:84.5px;top:760.5px;height:16px;line-height:16px;font-size:9px;font-weight:700;color:#2a2a2a;"><span style="transform:matrix(.875,.0005,0,1,0,0);transform-origin:0 50%">Accessibility: Investigate</span></div>
<div style="left:1219px;top:760.500px;width:30px;height:16.500px;background:#c6c6c6;"></div>
<svg style="left:1229px;top:763.5px" width="10" height="10" viewBox="0 0 10 10" fill="none" stroke="#555" stroke-width=".9"><rect x=".5" y=".5" width="9" height="9"/><path d="M.5 3.500h9M.5 6.500h9M3.500 .5v9M6.500 .5v9"/></svg>
<svg style="left:1259px;top:763.500px" width="11" height="10" viewBox="0 0 11 10" fill="none" stroke="#666" stroke-width=".9"><rect x=".5" y=".5" width="10" height="9" rx="1"/><rect x="3.300" y="2.500" width="4.400" height="5"/></svg>
<svg style="left:1289px;top:763.500px" width="11" height="10" viewBox="0 0 11 10" fill="none" stroke="#666" stroke-width=".9"><rect x=".5" y=".5" width="10" height="9"/><path d="M4 .5v5h3.500V.5"/></svg>
<div style="left:1313.500px;top:768px;width:6px;height:1px;background:#555;"></div>
<div style="left:1324px;top:768px;width:74.5px;height:1px;background:#6a6a6a;"></div>
<div style="left:1360px;top:764px;width:3px;height:9px;background:#3b3b3b;"></div>
<div style="left:1402.500px;top:768px;width:6px;height:1px;background:#555;"></div><div style="left:1405px;top:765.500px;width:1px;height:6px;background:#555;"></div>
<div class="t" style="left:1400px;top:760.500px;width:38.5px;height:16px;line-height:16px;text-align:right;font-size:9px;color:#262626;-webkit-text-stroke:.2px #262626;"><span style="transform:matrix(.829,.0005,0,1,0,0);transform-origin:100% 50%">100%</span></div>

<!-- ===== taskbar ===== -->
<div style="left:0;top:776.3px;width:1445px;height:36.7px;background:linear-gradient(90deg,#f1e0d0 0,#f0dfd0 430px,#ecdcd6 640px,#ecddd6 760px,#f1e0cc 860px,#ebdfd6 892px,#dddce8 928px,#dcdce9 1280px,#e9dfe0 1350px,#e6dde2 1400px,#dddbe7 1445px);"></div>

<!-- windows logo -->
<svg style="left:15.500px;top:786.400px" width="17.600" height="17.200" viewBox="0 0 18 18"><defs><linearGradient id="wg" x1="0" y1="0" x2="1" y2="1"><stop offset="0" stop-color="#45c4f5"/><stop offset="1" stop-color="#0a74d6"/></linearGradient></defs><rect x="0" y="0" width="8.400" height="8.400" rx=".6" fill="url(#wg)"/><rect x="9.600" y="0" width="8.400" height="8.400" rx=".6" fill="url(#wg)"/><rect x="0" y="9.600" width="8.400" height="8.400" rx=".6" fill="url(#wg)"/><rect x="9.600" y="9.600" width="8.400" height="8.400" rx=".6" fill="url(#wg)"/></svg>
<!-- search pill -->
<div style="left:43.2px;top:783.4px;width:164.4px;height:23px;border-radius:11.5px;background:#fbf5f0;border:1px solid #e6d8cc;box-shadow:0 .5px 1px rgba(120,90,60,.18);"></div>
<svg style="left:51px;top:788.500px" width="12" height="12" viewBox="0 0 12 12" fill="none" stroke="#222" stroke-width="1.300" stroke-linecap="round"><circle cx="5" cy="5" r="3.900"/><path d="M8 8l3.200 3.200"/></svg>
<div class="t" style="left:70.800px;top:786.500px;height:17px;line-height:17px;font-size:11px;color:#5f5f5f;"><span style="transform:matrix(.872,.0005,0,1,0,0);transform-origin:0 50%">Search</span></div>
<div style="left:169.5px;top:784.5px;width:36px;height:18.5px;border-radius:9px;background:radial-gradient(ellipse 50% 50% at 52% 48%,rgba(84,70,128,.92) 0,rgba(104,88,142,.8) 40%,rgba(150,130,165,.45) 70%,rgba(251,245,240,0) 100%);"></div>
<div style="left:171.5px;top:792.2px;width:5.6px;height:8.2px;border-radius:2px;background:linear-gradient(180deg,#fbb98a,#f59a55 70%,#f7c08c);"></div>
<div style="left:179.3px;top:787.3px;width:3.9px;height:5px;border-radius:1.500px;background:#f8b273;"></div>
<div style="left:184.7px;top:791.8px;width:2.500px;height:3.600px;border-radius:1px;background:#f9bd7c;"></div>
<div style="left:189px;top:789.500px;width:2px;height:2px;border-radius:1px;background:#f0b48a;"></div>
<div style="left:193px;top:786.8px;width:7.500px;height:10.4px;border-radius:2.500px;background:linear-gradient(180deg,#fbbd92,#f6a266 65%,#f8c493);"></div>
<!-- copilot -->
<svg style="left:217.3px;top:786px" width="18" height="16.5" viewBox="0 0 18 16.5"><defs>
<linearGradient id="cpa" x1="0" y1="0" x2="0" y2="1"><stop offset="0" stop-color="#2b86f2"/><stop offset=".5" stop-color="#35c4a0"/><stop offset="1" stop-color="#d6d83a"/></linearGradient>
<linearGradient id="cpb" x1="0" y1="0" x2="0" y2="1"><stop offset="0" stop-color="#a45cf0"/><stop offset=".55" stop-color="#e768ae"/><stop offset="1" stop-color="#f5913e"/></linearGradient>
<linearGradient id="cpc" x1="0" y1="0" x2="1" y2="0"><stop offset="0" stop-color="#2f7cf0"/><stop offset="1" stop-color="#6a5cf0"/></linearGradient>
<linearGradient id="cpd" x1="0" y1="0" x2="1" y2="0"><stop offset="0" stop-color="#f04d3a"/><stop offset="1" stop-color="#f6a63c"/></linearGradient></defs>
<path d="M7 4.200h6.800l-2.800 8.300H4.200z" fill="#f3b6d6"/><path d="M7 4.200h3.500L7.700 12.500H4.200z" fill="#8fdcc0"/><path d="M5.200 .4h5.600c1.400 0 2.100.8 2.400 1.800l.6 2H9.600c-1.400 0-2.200.7-2.600 2L5.700 10.700c-.4 1.200-1.200 1.800-2.400 1.800H1.700C.5 12.500-.2 11.600.2 10.300L2.500 2.700C2.900 1.200 3.900.4 5.200.4z" fill="url(#cpa)"/>
<path d="M12.800 16.100H7.200c-1.400 0-2.100-.8-2.400-1.800l-.6-2h4.200c1.400 0 2.200-.7 2.600-2L12.300 5.800c.4-1.200 1.200-1.800 2.400-1.800h1.600c1.200 0 1.900.9 1.500 2.200l-2.300 7.600c-.4 1.500-1.400 2.300-2.700 2.300z" fill="url(#cpb)"/>
<path d="M5.200.4h5.600c1.400 0 2.100.8 2.400 1.800l.6 2H9.600c-.9 0-1.600.3-2 .9L5.200.4z" fill="url(#cpc)" opacity=".85"/>
<path d="M12.800 16.100H7.200c-1.400 0-2.100-.8-2.400-1.800l-.6-2h4.200c.9 0 1.600-.3 2-.9l2.400 4.700z" fill="url(#cpd)" opacity=".9"/></svg>
<!-- outlook -->
<svg style="left:250.3px;top:786.1px" width="18.3" height="16.6" viewBox="0 0 18.3 16.6"><rect x="5" y="0" width="13.300" height="14" rx="1" fill="#1590df"/><rect x="5" y="0" width="6.600" height="4.600" fill="#0f78d0"/><rect x="11.600" y="0" width="6.700" height="4.600" fill="#35c0f5"/><rect x="5" y="4.600" width="6.600" height="4.600" fill="#0d66c0"/><rect x="11.600" y="4.600" width="6.700" height="4.600" fill="#1f9fe8"/><path d="M5 9.200l13.300 7.400H6a1 1 0 01-1-1z" fill="#1273c8"/><path d="M18.300 8.500v7.100a1 1 0 01-1 1H6z" fill="#2aa6ee"/><rect x="0" y="3.700" width="9.300" height="9.400" rx="1" fill="#0f6cbd"/><ellipse cx="4.650" cy="8.400" rx="2.300" ry="2.500" fill="none" stroke="#fff" stroke-width="1.300"/></svg>
<!-- file explorer -->
<svg style="left:283.3px;top:786.5px" width="18.4" height="16.2" viewBox="0 0 18.4 16.2"><defs><linearGradient id="fe" x1="0" y1="0" x2="0" y2="1"><stop offset="0" stop-color="#ffd650"/><stop offset="1" stop-color="#f7b52c"/></linearGradient></defs><path d="M0 1.300C0 .6.600 0 1.300 0h4.900c.5 0 .8.200 1.100.5l1.100 1.300H0z" fill="#e39e10"/><path d="M0 1.600h17.100c.7 0 1.300.6 1.300 1.300v12c0 .7-.6 1.300-1.300 1.300H1.300C.6 16.200 0 15.600 0 14.900z" fill="url(#fe)"/><path d="M3.500 16.200v-3.600c0-.8.600-1.400 1.400-1.400h8.600c.8 0 1.400.6 1.400 1.400v3.600z" fill="#1e86d6"/></svg>
<div style="left:290.200px;top:807.100px;width:4.500px;height:1.600px;border-radius:1px;background:#6f6a66;"></div>
<!-- bird app -->
<svg style="left:316.700px;top:785.700px" width="18" height="18.200" viewBox="0 0 18 18.200"><rect width="18" height="18.200" rx="3.200" fill="#3d8bf8"/><path d="M3.700 6.400c1.700 1 3.200 1.400 4.500 1 1.300-.4 3-2 5.800-4.500-.3 2.300-1 4-2.200 5.200 1-.1 2-.4 3-.9-1 2.300-2.800 3.700-5.300 4.100l.6 3-2.400-2.300-1.800.9.500-2.300C5 9.800 4 8.400 3.700 6.400z" fill="#fff"/></svg>
<!-- anthropic -->
<svg style="left:351.500px;top:787.300px" width="14.400" height="14.400" viewBox="0 0 14.400 14.400"><rect width="14.400" height="14.400" rx="3" fill="#fff"/><path d="M4.600 4.100h1.800l2.500 6.500H7.300l-.5-1.400H4.200l-.5 1.400H2.100zm.9 1.800l-.8 2.200h1.600zM8.100 4.100h1.600l2.600 6.500h-1.600z" fill="#111"/></svg>
<!-- vs code -->
<svg style="left:383px;top:785.700px" width="18.300" height="18.200" viewBox="0 0 18.300 18.200"><path d="M12.300.3a1.200 1.200 0 011.300-.2l3.900 1.900c.5.200.8.700.8 1.200v11.800c0 .5-.3 1-.8 1.200l-3.900 1.900a1.200 1.200 0 01-1.300-.2L4.900 11.200l-3 2.300a.8.800 0 01-1 0l-.7-.7a.8.800 0 010-1.100L2.900 9.100.2 6.500a.8.800 0 010-1.100l.7-.7a.8.800 0 011 0l3 2.300z" fill="#2a9df4"/><path d="M13 .1l4.500 1.900c.5.200.8.700.8 1.200v11.800c0 .5-.3 1-.8 1.200L13 18.100z" fill="#1180d8"/><path d="M13.600 5.200v7.800L8.400 9.100z" fill="#f0dfcf"/></svg>
<!-- snipping tool -->
<svg style="left:416px;top:795.800px" width="18.500" height="17.200" viewBox="0 0 18.500 17.200"><rect x=".2" y=".2" width="12.800" height="12.800" rx="2.200" fill="#eeeef1"/><path d="M2.600 8.500V2.600h6" fill="none" stroke="#d6342c" stroke-width="1.500" stroke-dasharray="1.300 .9"/><path d="M4.800 11.300h6.500V4.800" fill="none" stroke="#555d68" stroke-width="1.400"/><path d="M9 17.200l6.500-6.800" stroke="#2a8be0" stroke-width="1.100"/><circle cx="16.700" cy="9.600" r="1.500" fill="none" stroke="#2a8be0" stroke-width="1"/><circle cx="10" cy="16.500" r="1.400" fill="none" stroke="#2a8be0" stroke-width="1"/></svg>
<!-- excel -->
<svg style="left:449px;top:786.1px" width="18.300" height="16.600" viewBox="0 0 18.300 16.600"><path d="M6 0h11.300a1 1 0 011 1v3.150H5V1a1 1 0 011-1z" fill="#21a366"/><rect x="11.650" y="0" width="6.650" height="4.150" fill="#33c481"/><rect x="5" y="4.150" width="6.650" height="4.150" fill="#107c41"/><rect x="11.650" y="4.150" width="6.650" height="4.150" fill="#21a366"/><rect x="5" y="8.300" width="6.650" height="4.150" fill="#185c37"/><rect x="11.650" y="8.300" width="6.650" height="4.150" fill="#107c41"/><path d="M5 12.450h13.300v3.150a1 1 0 01-1 1H6a1 1 0 01-1-1z" fill="#185c37"/><rect x="0" y="3.700" width="9.300" height="9.400" rx="1" fill="#107c41"/><path d="M2.500 5.900h1.500l.75 1.600.8-1.600h1.400L5.500 8.400 7 10.900H5.500l-.8-1.600-.8 1.600H2.400L3.900 8.400z" fill="#fff"/></svg>
<div style="left:455.800px;top:807.100px;width:4.500px;height:1.600px;border-radius:1px;background:#6f6a66;"></div>
<!-- tray -->
<svg style="left:1243.500px;top:791.500px" width="9" height="6" viewBox="0 0 9 6" fill="none" stroke="#222" stroke-width="1.200" stroke-linecap="round" stroke-linejoin="round"><path d="M.8 5L4.500 1.200 8.200 5"/></svg>
<svg style="left:1265px;top:790px" width="13" height="10" viewBox="0 0 13 10"><path d="M3.200 9.200h7a2.300 2.300 0 00.5-4.500 3.700 3.700 0 00-7-1A2.800 2.800 0 003.200 9.200z" fill="#b9b9c2" stroke="#222" stroke-width="1.1"/></svg>
<div class="t" style="left:1291.500px;top:787.500px;height:16px;line-height:16px;font-size:9.500px;color:#222;"><span style="transform:matrix(.85,.0005,0,1,0,0);transform-origin:0 50%">ENG</span></div>
<svg style="left:1322.500px;top:789px" width="12.500" height="10.500" viewBox="0 0 12.500 10.500" fill="none" stroke="#222" stroke-width="1" stroke-linecap="round"><path d="M.7 3.600a7.800 7.800 0 0111.100 0M2.500 5.600a5.300 5.300 0 017.500 0M4.300 7.500a2.800 2.800 0 013.900 0"/><circle cx="6.250" cy="9.300" r=".9" fill="#222" stroke="none"/></svg>
<svg style="left:1340.500px;top:789.500px" width="12" height="10" viewBox="0 0 12 10" fill="none" stroke="#222" stroke-width="1" stroke-linecap="round" stroke-linejoin="round"><path d="M.7 3.500h2L5.500 1v8L2.700 6.500h-2z"/><path d="M7.300 3.300a2.500 2.500 0 010 3.400M8.800 1.800a4.700 4.700 0 010 6.400" /><path d="M10.500 .8a6.500 6.500 0 010 8.400" stroke="#999"/></svg>
<div class="t" style="left:1362px;top:781.500px;width:50px;height:13px;line-height:13px;text-align:right;font-size:9.500px;color:#1c1c1c;-webkit-text-stroke:.15px #1c1c1c;"><span style="transform:matrix(.932,.0005,0,1,0,0);transform-origin:100% 50%">9:01 PM</span></div>
<div class="t" style="left:1362px;top:793.700px;width:50px;height:13px;line-height:13px;text-align:right;font-size:9.500px;color:#1c1c1c;-webkit-text-stroke:.15px #1c1c1c;"><span style="transform:matrix(1.0,.0005,0,1,0,0);transform-origin:100% 50%">16/11/2024</span></div>
<svg style="left:1418.300px;top:788.800px" width="11" height="12" viewBox="0 0 11 12" fill="#1d4487"><path d="M5.500 .3a3.600 3.600 0 00-3.600 3.600v2.600L.5 8.800v.7h10v-.7L9.100 6.500V3.900A3.600 3.600 0 005.500.3z"/><path d="M4.300 10.300a1.250 1.250 0 002.400 0z"/></svg>

</div></body></html>
